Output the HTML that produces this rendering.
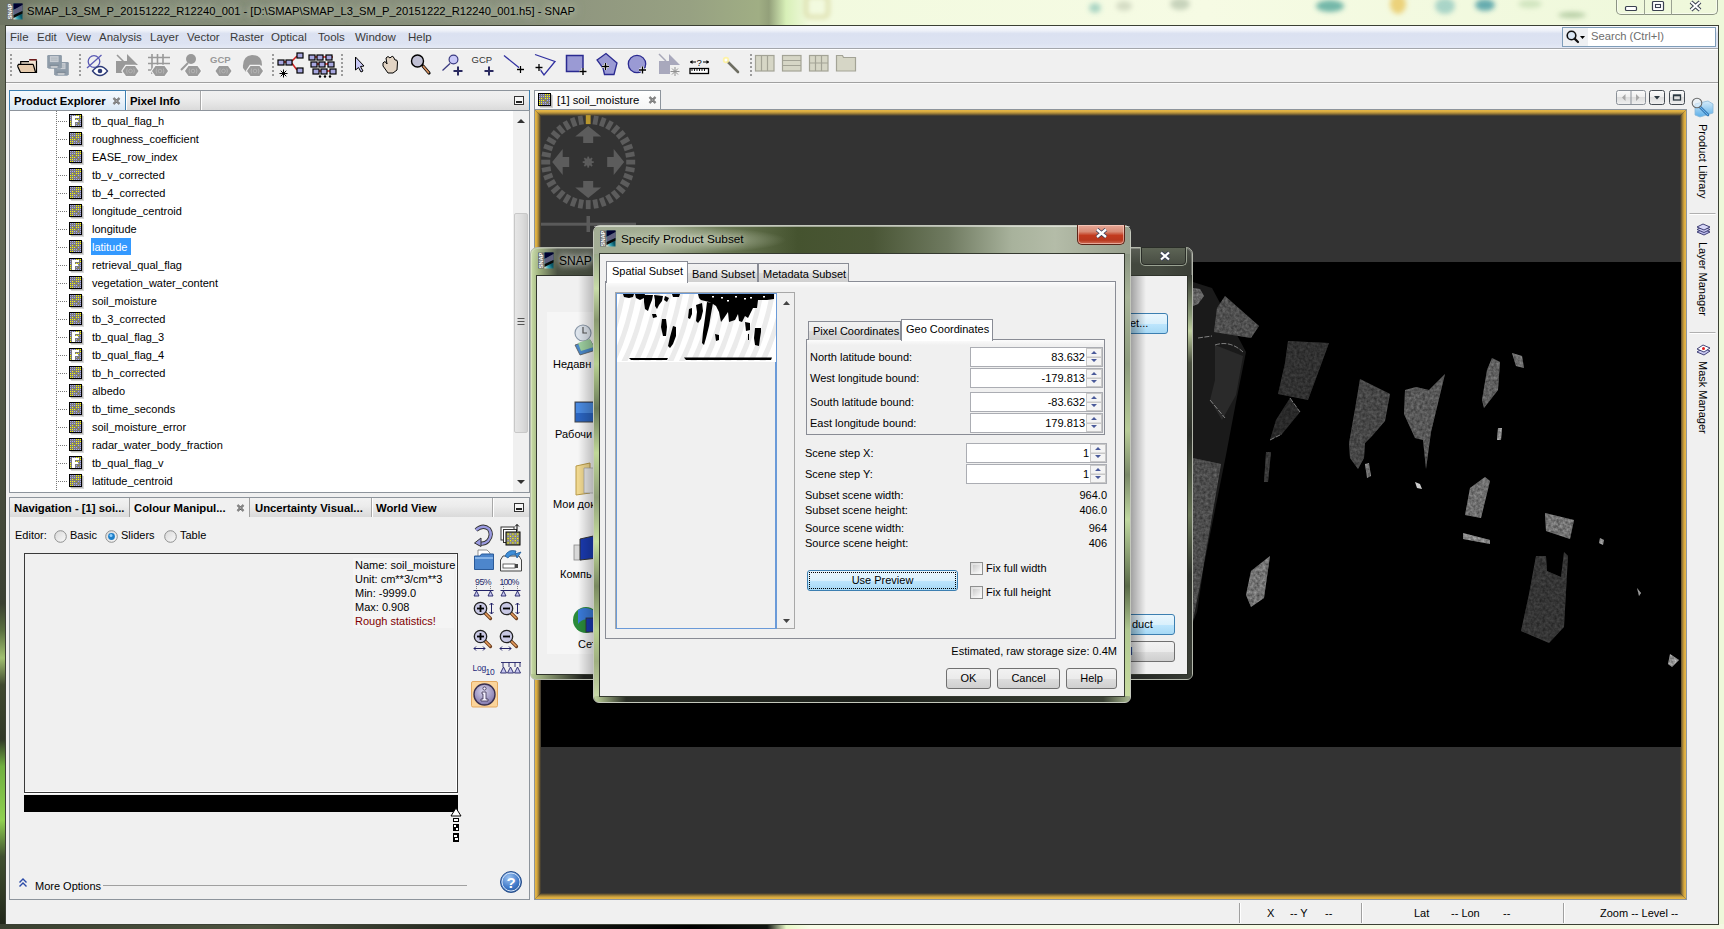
<!DOCTYPE html>
<html><head><meta charset="utf-8">
<style>
*{margin:0;padding:0;box-sizing:border-box}
html,body{width:1724px;height:929px;overflow:hidden;background:#6f7a62;font-family:"Liberation Sans",sans-serif;font-size:11px;color:#000}
.a{position:absolute}
.nw{white-space:nowrap}
#titlebg{left:0;top:0;width:1724px;height:929px;background:linear-gradient(90deg,#6d7462 0,#858b78 8%,#8c917e 30%,#97a182 40%,#a0ae84 44%,#93a07a 44.6%,#d8f0b8 45.6%,#f2fadf 47%,#f6fbe4 70%,#eef8da 100%)}
#frameL{left:0;top:25px;width:5px;height:904px;background:linear-gradient(180deg,#767c68 0,#5e6452 30%,#3a4032 64%,#5a7040 67%,#a0c070 70%,#404a30 73%,#303828 79%,#70b040 82%,#90d050 88%,#405030 92%,#202418 100%)}
#frameB{left:0;top:924px;width:1724px;height:5px;background:linear-gradient(90deg,#3a4030 0,#4e5440 15%,#2a2e24 25%,#000 40%,#101410 44.5%,#e8f8c8 45.6%,#f8fce8 47%,#f4f8e2 100%)}
#client{left:5px;top:25px;width:1714px;height:900px;background:#f0f0f0;border:1px solid #3b4034}
.menu{font-size:11.5px;color:#3a3a3a}
.tabt{font-size:11.3px;font-weight:bold;color:#000;line-height:18px}
.tree{font-size:11px;line-height:18px}
.title{font-size:11.2px;line-height:13px;color:#000;text-shadow:0 0 7px rgba(220,228,205,0.9),0 0 12px rgba(210,218,195,0.6)}
</style></head><body>
<div id="titlebg" class="a"></div>
<div id="frameL" class="a"></div>
<div id="frameB" class="a"></div>
<svg class="a" style="left:7px;top:3px" width="16" height="17" viewBox="0 0 16 17"><defs><linearGradient id="sim" x1="0" y1="1" x2="1" y2="0"><stop offset="0" stop-color="#f0e8d8"/><stop offset="0.25" stop-color="#3aa8b8"/><stop offset="0.5" stop-color="#0a5a6a"/><stop offset="1" stop-color="#102030"/></linearGradient></defs><rect x="0" y="0.5" width="6" height="16" fill="#6e6e6e"/><text transform="translate(5.3 16.3) rotate(-90)" font-size="6.2" font-weight="bold" fill="#fff" font-family="Liberation Sans" textLength="15.5" lengthAdjust="spacingAndGlyphs">SNAP</text><rect x="6.5" y="0.5" width="9" height="16" fill="url(#sim)"/><path d="M6.5 0.5 H15.5 V2 L6.5 7Z" fill="#000030"/><path d="M6.5 7 L15.5 2 V8 L6.5 12Z" fill="#60607e"/><path d="M6.5 12 L15.5 8 V10.5 L6.5 15Z" fill="#080808"/></svg>
<div class="a title nw" style="left:27px;top:5px">SMAP_L3_SM_P_20151222_R12240_001 - [D:\SMAP\SMAP_L3_SM_P_20151222_R12240_001.h5] - SNAP</div>
<div id="client" class="a"></div>
<svg class="a" style="left:780px;top:0" width="944" height="25" viewBox="780 0 944 25"><defs><filter id="bl" x="-50%" y="-50%" width="200%" height="200%"><feGaussianBlur stdDeviation="2.5"/></filter></defs><g filter="url(#bl)"><rect x="806" y="-4" width="22" height="21" rx="4" fill="none" stroke="#d8d8a0" stroke-width="3"/><ellipse cx="1124" cy="6" rx="8" ry="5" fill="#c0c8b0" opacity="0.6"/><ellipse cx="1180" cy="4" rx="10" ry="6" fill="#a8b8a0" opacity="0.6"/><ellipse cx="1330" cy="6" rx="14" ry="6" fill="#3a9a90" opacity="0.7"/><ellipse cx="1398" cy="4" rx="8" ry="10" fill="#e8c050" opacity="0.7"/><ellipse cx="1445" cy="6" rx="10" ry="8" fill="#60b0b0" opacity="0.5"/><ellipse cx="1485" cy="5" rx="10" ry="6" fill="#2a8a9a" opacity="0.7"/><ellipse cx="1530" cy="4" rx="12" ry="4" fill="#b0d0a0" opacity="0.5"/><ellipse cx="1572" cy="15" rx="14" ry="3" fill="#90b080" opacity="0.6"/><ellipse cx="1095" cy="8" rx="6" ry="5" fill="#50a8a0" opacity="0.45"/></g></svg>
<div class="a" style="left:1616px;top:-2px;width:102px;height:17px;border:1px solid #8c9484;border-top:none;border-radius:0 0 5px 5px;background:rgba(240,248,220,0.45);box-shadow:inset 0 0 0 1px rgba(255,255,255,0.5)"></div>
<div class="a" style="left:1644px;top:0;width:1px;height:15px;background:#9aa292"></div><div class="a" style="left:1671px;top:0;width:1px;height:15px;background:#9aa292"></div>
<svg class="a" style="left:1620px;top:0" width="98" height="14" viewBox="1620 0 98 14"><rect x="1625.5" y="6.5" width="11" height="4" rx="1" fill="#fff" stroke="#3a4050" stroke-width="1.2"/><rect x="1652.5" y="1.5" width="11" height="9" rx="1" fill="#fff" stroke="#3a4050" stroke-width="1.2"/><rect x="1655.5" y="4.5" width="5" height="3" fill="none" stroke="#3a4050" stroke-width="1.1"/><path d="M1691 2 L1700 10 M1700 2 L1691 10" stroke="#3a4050" stroke-width="4"/><path d="M1691 2 L1700 10 M1700 2 L1691 10" stroke="#fff" stroke-width="2"/></svg>

<div class="a" style="left:6px;top:26px;width:1712px;height:22px;background:linear-gradient(180deg,#f9fafd 0,#eef1f9 20%,#dbe1f1 35%,#dde3f2 80%,#e4e9f5 100%)"></div>
<div class="a" style="left:6px;top:48px;width:1712px;height:1px;background:#a3a6ab"></div>
<div class="a" style="left:6px;top:49px;width:1712px;height:1px;background:#ffffff"></div>
<div class="a nw menu" style="left:10px;top:31px">File</div>
<div class="a nw menu" style="left:37px;top:31px">Edit</div>
<div class="a nw menu" style="left:66px;top:31px">View</div>
<div class="a nw menu" style="left:99px;top:31px">Analysis</div>
<div class="a nw menu" style="left:150px;top:31px">Layer</div>
<div class="a nw menu" style="left:187px;top:31px">Vector</div>
<div class="a nw menu" style="left:230px;top:31px">Raster</div>
<div class="a nw menu" style="left:271px;top:31px">Optical</div>
<div class="a nw menu" style="left:318px;top:31px">Tools</div>
<div class="a nw menu" style="left:355px;top:31px">Window</div>
<div class="a nw menu" style="left:408px;top:31px">Help</div>
<div class="a" style="left:1562px;top:27px;width:154px;height:20px;border:1px solid #7f9db9;background:#fff"></div>
<div class="a" style="left:1563px;top:28px;width:25px;height:18px;background:#eef0f3"></div>
<svg class="a" style="left:1565px;top:29px" width="22" height="16" viewBox="0 0 22 16"><circle cx="6.5" cy="6.5" r="4.3" fill="#dbe8f5" stroke="#111" stroke-width="1.6"/><path d="M9.6 9.6 L13 13" stroke="#111" stroke-width="2.2" stroke-linecap="round"/><path d="M15 7 L20 7 L17.5 10 Z" fill="#000"/></svg>
<div class="a nw" style="left:1591px;top:29px;font-size:11.2px;line-height:15px;color:#6d6d6d">Search (Ctrl+I)</div>

<div class="a" style="left:6px;top:82px;width:1712px;height:1px;background:#a0a0a0"></div><div class="a" style="left:6px;top:83px;width:1712px;height:1px;background:#fafafa"></div>
<svg class="a" style="left:0;top:0" width="870" height="90" viewBox="0 0 870 90"><rect x="10" y="54" width="2" height="2" fill="#9c9c9c"/><rect x="10" y="58" width="2" height="2" fill="#9c9c9c"/><rect x="10" y="62" width="2" height="2" fill="#9c9c9c"/><rect x="10" y="66" width="2" height="2" fill="#9c9c9c"/><rect x="10" y="70" width="2" height="2" fill="#9c9c9c"/><rect x="10" y="74" width="2" height="2" fill="#9c9c9c"/><rect x="79" y="54" width="2" height="2" fill="#9c9c9c"/><rect x="79" y="58" width="2" height="2" fill="#9c9c9c"/><rect x="79" y="62" width="2" height="2" fill="#9c9c9c"/><rect x="79" y="66" width="2" height="2" fill="#9c9c9c"/><rect x="79" y="70" width="2" height="2" fill="#9c9c9c"/><rect x="79" y="74" width="2" height="2" fill="#9c9c9c"/><rect x="272" y="54" width="2" height="2" fill="#9c9c9c"/><rect x="272" y="58" width="2" height="2" fill="#9c9c9c"/><rect x="272" y="62" width="2" height="2" fill="#9c9c9c"/><rect x="272" y="66" width="2" height="2" fill="#9c9c9c"/><rect x="272" y="70" width="2" height="2" fill="#9c9c9c"/><rect x="272" y="74" width="2" height="2" fill="#9c9c9c"/><rect x="341" y="54" width="2" height="2" fill="#9c9c9c"/><rect x="341" y="58" width="2" height="2" fill="#9c9c9c"/><rect x="341" y="62" width="2" height="2" fill="#9c9c9c"/><rect x="341" y="66" width="2" height="2" fill="#9c9c9c"/><rect x="341" y="70" width="2" height="2" fill="#9c9c9c"/><rect x="341" y="74" width="2" height="2" fill="#9c9c9c"/><rect x="750" y="54" width="2" height="2" fill="#9c9c9c"/><rect x="750" y="58" width="2" height="2" fill="#9c9c9c"/><rect x="750" y="62" width="2" height="2" fill="#9c9c9c"/><rect x="750" y="66" width="2" height="2" fill="#9c9c9c"/><rect x="750" y="70" width="2" height="2" fill="#9c9c9c"/><rect x="750" y="74" width="2" height="2" fill="#9c9c9c"/><path d="M21 61.5 H29 L29.5 60 H36.5 V72.5 H21Z" fill="#f2e4d2"/><path d="M29.2 59.8 H36.8" stroke="#6a1a1a" stroke-width="1.6"/><path d="M20.7 64 V61.6 H29 M36.5 60.5 V73" stroke="#000" stroke-width="1.2" fill="none"/><path d="M17.5 66 L18.5 64.4 H33.2 L35.6 72.5 H20.6Z" fill="#e6ccae"/><path d="M17.5 66 L18.5 64.4 H33.2 M17.5 66 L20.5 72.5 H36.5 M33.2 64.4 L35.6 72.5" stroke="#000" stroke-width="1.2" fill="none"/><path d="M54.1 63.300000000000004 Q54.1 62.1 55.300000000000004 62.1 H67.6 Q68.8 62.1 68.8 63.300000000000004 V74.3 L67.3 75.8 H55.6 L54.1 74.3Z" fill="#8e9ba8"/><rect x="56.800000000000004" y="63.1" width="8.7" height="6" fill="#c9ced4"/><path d="M57.800000000000004 65.1 H64.5 M57.800000000000004 67.1 H64.5" stroke="#a8b0b8" stroke-width="0.9"/><rect x="57.6" y="72.6" width="7" height="2.5" rx="1" fill="#c4c8cc"/><rect x="56.6" y="71.8" width="9" height="1" fill="#7a8692"/><path d="M47.2 56.300000000000004 Q47.2 55.1 48.400000000000006 55.1 H60.7 Q61.900000000000006 55.1 61.900000000000006 56.300000000000004 V67.3 L60.400000000000006 68.8 H48.7 L47.2 67.3Z" fill="#8e9ba8"/><rect x="49.900000000000006" y="56.1" width="8.7" height="6" fill="#c9ced4"/><path d="M50.900000000000006 58.1 H57.6 M50.900000000000006 60.1 H57.6" stroke="#a8b0b8" stroke-width="0.9"/><rect x="50.7" y="65.6" width="7" height="2.5" rx="1" fill="#c4c8cc"/><rect x="49.7" y="64.8" width="9" height="1" fill="#7a8692"/><circle cx="94" cy="61.5" r="5.8" fill="none" stroke="#5a5ab4" stroke-width="1.3"/><path d="M87 68 L101.5 55" stroke="#5a5ab4" stroke-width="1.3"/><path d="M92.5 71 Q96 66.5 100 66.5 Q104 66.5 107.5 71 Q104 75.5 100 75.5 Q96 75.5 92.5 71Z" fill="#fff" stroke="#2e3c78" stroke-width="1.3"/><circle cx="100" cy="71" r="2.3" fill="#2e3c78"/><path d="M117 55 L124 62" stroke="#999" stroke-width="1.6"/><rect x="116" y="61" width="12" height="12" fill="#999"/><path d="M127 54 L138 65 H127Z" fill="#999"/><polygon points="121.2,71.0 125.3,64.8 135.7,64.8 139.8,71.0 135.7,77.2 125.3,77.2" fill="#f4f4f4"/><polygon points="122.5,71.0 126.0,66.0 135.0,66.0 138.5,71.0 135.0,76.0 126.0,76.0" fill="#9a9a9a"/><path d="M127.2 68.5 Q126.0 71.0 127.2 73.5 M133.8 68.5 Q135.0 71.0 133.8 73.5" stroke="#b4b4b4" stroke-width="0.9" fill="none"/><circle cx="130.5" cy="71.0" r="1.8" fill="none" stroke="#b4b4b4" stroke-width="0.9"/><path d="M152 54 V74 M157.5 54 V66 M163 54 V66 M148 57.5 H170 M148 63.5 H170 M148 70 H152" stroke="#999" stroke-width="1.6"/><polygon points="150.7,71.0 154.8,64.8 165.2,64.8 169.3,71.0 165.2,77.2 154.8,77.2" fill="#f4f4f4"/><polygon points="152.0,71.0 155.5,66.0 164.5,66.0 168.0,71.0 164.5,76.0 155.5,76.0" fill="#9a9a9a"/><path d="M156.7 68.5 Q155.5 71.0 156.7 73.5 M163.3 68.5 Q164.5 71.0 163.3 73.5" stroke="#b4b4b4" stroke-width="0.9" fill="none"/><circle cx="160.0" cy="71.0" r="1.8" fill="none" stroke="#b4b4b4" stroke-width="0.9"/><circle cx="191" cy="59" r="5" fill="#999"/><path d="M181 70 L188 63" stroke="#999" stroke-width="2"/><polygon points="183.7,71.0 187.8,64.8 198.2,64.8 202.3,71.0 198.2,77.2 187.8,77.2" fill="#f4f4f4"/><polygon points="185.0,71.0 188.5,66.0 197.5,66.0 201.0,71.0 197.5,76.0 188.5,76.0" fill="#9a9a9a"/><path d="M189.7 68.5 Q188.5 71.0 189.7 73.5 M196.3 68.5 Q197.5 71.0 196.3 73.5" stroke="#b4b4b4" stroke-width="0.9" fill="none"/><circle cx="193.0" cy="71.0" r="1.8" fill="none" stroke="#b4b4b4" stroke-width="0.9"/><text x="210" y="63" font-size="9.5" font-weight="bold" fill="#999" font-family="Liberation Sans">GCP</text><polygon points="214.2,71.0 218.3,64.8 228.7,64.8 232.8,71.0 228.7,77.2 218.3,77.2" fill="#f4f4f4"/><polygon points="215.5,71.0 219.0,66.0 228.0,66.0 231.5,71.0 228.0,76.0 219.0,76.0" fill="#9a9a9a"/><path d="M220.2 68.5 Q219.0 71.0 220.2 73.5 M226.8 68.5 Q228.0 71.0 226.8 73.5" stroke="#b4b4b4" stroke-width="0.9" fill="none"/><circle cx="223.5" cy="71.0" r="1.8" fill="none" stroke="#b4b4b4" stroke-width="0.9"/><path d="M243 68 Q242 56 252 55 Q262 55 262 65 L256 72 H246Z" fill="#999"/><polygon points="245.7,71.0 249.8,64.8 260.2,64.8 264.3,71.0 260.2,77.2 249.8,77.2" fill="#f4f4f4"/><polygon points="247.0,71.0 250.5,66.0 259.5,66.0 263.0,71.0 259.5,76.0 250.5,76.0" fill="#9a9a9a"/><path d="M251.7 68.5 Q250.5 71.0 251.7 73.5 M258.3 68.5 Q259.5 71.0 258.3 73.5" stroke="#b4b4b4" stroke-width="0.9" fill="none"/><circle cx="255.0" cy="71.0" r="1.8" fill="none" stroke="#b4b4b4" stroke-width="0.9"/><path d="M284 62 H291 L297 56 M291 62 L297 70" stroke="#d02020" stroke-width="1.5" fill="none"/><rect x="278" y="60" width="6" height="5" fill="#a8a8e0" stroke="#000" stroke-width="1.2"/><rect x="286" y="60" width="6" height="5" fill="#a8a8e0" stroke="#000" stroke-width="1.2"/><rect x="297" y="53" width="6" height="5" fill="#a8a8e0" stroke="#000" stroke-width="1.2"/><rect x="297" y="68" width="6" height="5" fill="#a8a8e0" stroke="#000" stroke-width="1.2"/><path d="M283.5 69.5 V77.5 M279.5 73.5 H287.5 M280.7 70.7 L286.3 76.3 M286.3 70.7 L280.7 76.3" stroke="#000" stroke-width="1"/><path d="M312 57 H333 M314 64 H333 M316 71 H333" stroke="#d02020" stroke-width="1.5"/><rect x="309" y="55" width="6" height="5" fill="#a8a8e0" stroke="#000" stroke-width="1.2"/><rect x="317" y="55" width="6" height="5" fill="#a8a8e0" stroke="#000" stroke-width="1.2"/><rect x="326" y="55" width="6" height="5" fill="#a8a8e0" stroke="#000" stroke-width="1.2"/><rect x="311" y="62" width="6" height="5" fill="#a8a8e0" stroke="#000" stroke-width="1.2"/><rect x="319" y="62" width="6" height="5" fill="#a8a8e0" stroke="#000" stroke-width="1.2"/><rect x="328" y="62" width="6" height="5" fill="#a8a8e0" stroke="#000" stroke-width="1.2"/><rect x="313" y="69" width="6" height="5" fill="#a8a8e0" stroke="#000" stroke-width="1.2"/><rect x="321" y="69" width="6" height="5" fill="#a8a8e0" stroke="#000" stroke-width="1.2"/><rect x="330" y="69" width="6" height="5" fill="#a8a8e0" stroke="#000" stroke-width="1.2"/><circle cx="320" cy="76.5" r="1.2" fill="#000"/><circle cx="325" cy="76.5" r="1.2" fill="#000"/><circle cx="330" cy="76.5" r="1.2" fill="#000"/><path d="M355.5 57 L355.5 70 L358.5 67.5 L361 72 L363 71 L360.5 66.5 L364 66 Z" fill="#c8c8f4" stroke="#000" stroke-width="1"/><path d="M383 63 Q385 60 387 64 L386 58 Q388 55 390 58 L391 57 Q393 55 394 58 L395 60 Q397 59 397.5 62 L397 70 L393 73 H388 L383 66 Z" fill="#e2d4c4" stroke="#000" stroke-width="1"/><path d="M423 66 L429 73" stroke="#000" stroke-width="3.2" stroke-linecap="round"/><path d="M423.5 66.5 L428.5 72.5" stroke="#d49060" stroke-width="1.8" stroke-linecap="round"/><circle cx="417.5" cy="61" r="6" fill="#c0c0d4" stroke="#000" stroke-width="1.4"/><path d="M442.5 70.5 L450 63.5" stroke="#3a3a80" stroke-width="1.3"/><circle cx="453.5" cy="59.5" r="4.4" fill="#c8c8f8" stroke="#3a3a80" stroke-width="1.2"/><path d="M453.5 71H462.5M458 66.5V75.5" stroke="#2a2a60" stroke-width="2"/><text x="471.5" y="63" font-size="9.5" fill="#333" font-family="Liberation Sans">GCP</text><path d="M484.5 71H493.5M489 66.5V75.5" stroke="#2a2a60" stroke-width="2"/><path d="M504 55.5 L519.5 68" stroke="#3030a0" stroke-width="1.3"/><path d="M517.0 69.5H524.0M520.5 66.0V73.0" stroke="#fff" stroke-width="2.8"/><path d="M517.0 69.5H524.0M520.5 66.0V73.0" stroke="#000" stroke-width="1.3"/><path d="M535 54.5 L555 61.5 L544 75 L539 68" stroke="#3030a0" stroke-width="1.3" fill="none"/><path d="M535.5 67.5H542.5M539 64.0V71.0" stroke="#fff" stroke-width="2.8"/><path d="M535.5 67.5H542.5M539 64.0V71.0" stroke="#000" stroke-width="1.3"/><rect x="566.5" y="55.5" width="16.5" height="16" fill="#9a9ad4" stroke="#2a2a90" stroke-width="1.5"/><path d="M579.5 71.5H586.5M583 68.0V75.0" stroke="#fff" stroke-width="2.9"/><path d="M579.5 71.5H586.5M583 68.0V75.0" stroke="#000" stroke-width="1.4"/><path d="M597 60 L606 53.5 L617 63 L614 74.5 L604.5 74.5 L603 68 Z" fill="#9a9ad4" stroke="#2a2a90" stroke-width="1.3"/><path d="M602.0 66.5H609.0M605.5 63.0V70.0" stroke="#fff" stroke-width="2.9"/><path d="M602.0 66.5H609.0M605.5 63.0V70.0" stroke="#000" stroke-width="1.4"/><circle cx="637" cy="64" r="8.7" fill="#9a9ad4" stroke="#2a2a90" stroke-width="1.3"/><path d="M639.0 70H646.0M642.5 66.5V73.5" stroke="#fff" stroke-width="2.9"/><path d="M639.0 70H646.0M642.5 66.5V73.5" stroke="#000" stroke-width="1.4"/><path d="M659 54 L666 61" stroke="#a8a8b8" stroke-width="1.5"/><rect x="659" y="61" width="11" height="13" fill="#a8a8bc"/><path d="M669 54 L680 65 H669Z" fill="#a8a8bc"/><path d="M675 67 V76 M670.5 71.5 H679.5 M672 68.5 L678 74.5 M678 68.5 L672 74.5" stroke="#909090" stroke-width="1"/><rect x="690" y="68.5" width="18.5" height="5" fill="#fff" stroke="#000" stroke-width="1.3"/><path d="M692 69 V71 M694.5 69 V71 M697 69 V71 M699.5 69 V71 M702 69 V71 M704.5 69 V71" stroke="#000" stroke-width="0.9"/><path d="M690 62 H696 M703 62 H709" stroke="#000" stroke-width="1.1"/><path d="M690 62 L692.5 60 V64Z M709 62 L706.5 60 V64Z" fill="#000"/><text x="696.5" y="65.5" font-size="9.5" fill="#000" font-family="Liberation Sans">?</text><path d="M727 61 L738 72" stroke="#6e6e62" stroke-width="2.6" stroke-linecap="round"/><circle cx="726" cy="60" r="3.2" fill="#fff3a0" opacity="0.9"/><circle cx="726" cy="60" r="1.5" fill="#fff"/><rect x="755.5" y="55.5" width="18.5" height="15.5" fill="#d6d6c6" stroke="#a3a396" stroke-width="1.2"/><path d="M761.5 55.5 V71 M767.5 55.5 V71" stroke="#a3a396" stroke-width="1.2"/><rect x="782.5" y="55.5" width="18.5" height="15.5" fill="#d6d6c6" stroke="#a3a396" stroke-width="1.2"/><path d="M782.5 60.5 H801 M782.5 65.5 H801" stroke="#a3a396" stroke-width="1.2"/><rect x="809.5" y="55.5" width="18.5" height="15.5" fill="#d6d6c6" stroke="#a3a396" stroke-width="1.2"/><path d="M815.5 55.5 V71 M821.5 55.5 V71 M809.5 63 H828" stroke="#a3a396" stroke-width="1.2"/><path d="M836.5 55.5 H842.5 L843.5 57.5 H855.5 V71 H836.5Z" fill="#d6d6c6" stroke="#a3a396" stroke-width="1.2"/></svg>

<div class="a" style="left:9px;top:90px;width:521px;height:21px;border:1px solid #8d949c;border-bottom:none;background:linear-gradient(180deg,#f0f0f0 0,#ececec 40%,#d9d9d9 100%)"></div>
<div class="a" style="left:9px;top:90px;width:117px;height:21px;border:1px solid #3c7fb1;border-bottom:none;background:linear-gradient(180deg,#f5f9fd 0,#e9f2fa 50%,#d5e6f5 100%)"></div>
<div class="a" style="left:126px;top:91px;width:1px;height:20px;background:#fff"></div>
<div class="a" style="left:200px;top:91px;width:1px;height:20px;background:#a8a8a8"></div><div class="a" style="left:201px;top:91px;width:1px;height:20px;background:#fff"></div>
<div class="a" style="left:529px;top:90px;width:1px;height:21px;background:#3c7fb1"></div>
<div class="a nw tabt" style="left:14px;top:92px">Product Explorer</div>
<div class="a nw tabt" style="left:130px;top:92px">Pixel Info</div>
<svg class="a" style="left:112px;top:97px" width="9" height="8" viewBox="0 0 9 8"><path d="M1.5 1 L7.5 7 M7.5 1 L1.5 7" stroke="#555" stroke-width="2.2"/><path d="M1.5 1 L7.5 7 M7.5 1 L1.5 7" stroke="#ddd" stroke-width="0.7"/></svg>
<div class="a" style="left:514px;top:96px;width:10px;height:9px;border:1px solid #333;background:#f6f6f6"></div><div class="a" style="left:516px;top:101px;width:6px;height:2px;background:#222"></div>
<div class="a" style="left:9px;top:110px;width:521px;height:383px;border:1px solid #8d949c;background:#fff"></div>
<div class="a" style="left:513px;top:111px;width:16px;height:381px;background:#f0f0f0"></div>
<div class="a" style="left:514px;top:213px;width:14px;height:220px;border:1px solid #c8c8c8;border-radius:2px;background:linear-gradient(90deg,#e6e6e6,#dcdcdc 60%,#d0d0d0)"></div>
<svg class="a" style="left:513px;top:111px" width="16" height="381" viewBox="0 0 16 381"><path d="M4 12 L8 8 L12 12Z" fill="#333"/><path d="M4 369 L8 373 L12 369Z" fill="#333"/><path d="M4.5 207.5 H11.5 M4.5 210.5 H11.5 M4.5 213.5 H11.5" stroke="#555" stroke-width="1"/></svg>
<svg class="a" style="left:10px;top:111px" width="500" height="381" viewBox="10 111 500 381" shape-rendering="crispEdges"><path d="M56.5 111 V491" stroke="#777" stroke-width="1" stroke-dasharray="1 1"/><path d="M58 121.5 H67" stroke="#777" stroke-width="1" stroke-dasharray="1 1"/><rect x="71" y="116" width="13" height="13" fill="#000" opacity="0.15"/><rect x="70" y="115" width="13" height="13" fill="#000" opacity="0.15"/><rect x="69" y="114" width="13" height="13" fill="#000"/><rect x="70" y="115" width="11" height="11" fill="#7c7c7c"/><rect x="70" y="115" width="1" height="1" fill="#a8a8f8"/><rect x="72" y="115" width="1" height="1" fill="#a8a8f8"/><rect x="74" y="115" width="1" height="1" fill="#a8a8f8"/><rect x="76" y="115" width="1" height="1" fill="#ffff00"/><rect x="78" y="115" width="1" height="1" fill="#ffff00"/><rect x="80" y="115" width="1" height="1" fill="#ffff00"/><rect x="70" y="117" width="1" height="1" fill="#a8a8f8"/><rect x="72" y="117" width="1" height="1" fill="#a8a8f8"/><rect x="74" y="117" width="1" height="1" fill="#a8a8f8"/><rect x="76" y="117" width="1" height="1" fill="#ffff00"/><rect x="78" y="117" width="1" height="1" fill="#ffff00"/><rect x="80" y="117" width="1" height="1" fill="#ffff00"/><rect x="70" y="119" width="1" height="1" fill="#a8a8f8"/><rect x="72" y="119" width="1" height="1" fill="#ffff00"/><rect x="74" y="119" width="1" height="1" fill="#a09a20"/><rect x="76" y="119" width="1" height="1" fill="#ffff00"/><rect x="78" y="119" width="1" height="1" fill="#ffff00"/><rect x="80" y="119" width="1" height="1" fill="#a8a8f8"/><rect x="70" y="121" width="1" height="1" fill="#ffff00"/><rect x="72" y="121" width="1" height="1" fill="#ffff00"/><rect x="74" y="121" width="1" height="1" fill="#ffff00"/><rect x="76" y="121" width="1" height="1" fill="#a09a20"/><rect x="78" y="121" width="1" height="1" fill="#a8a8f8"/><rect x="80" y="121" width="1" height="1" fill="#a8a8f8"/><rect x="70" y="123" width="1" height="1" fill="#ffff00"/><rect x="72" y="123" width="1" height="1" fill="#ffff00"/><rect x="74" y="123" width="1" height="1" fill="#a8a8f8"/><rect x="76" y="123" width="1" height="1" fill="#a8a8f8"/><rect x="78" y="123" width="1" height="1" fill="#a09a20"/><rect x="80" y="123" width="1" height="1" fill="#a8a8f8"/><rect x="70" y="125" width="1" height="1" fill="#ffff00"/><rect x="72" y="125" width="1" height="1" fill="#ffff00"/><rect x="74" y="125" width="1" height="1" fill="#a8a8f8"/><rect x="76" y="125" width="1" height="1" fill="#a8a8f8"/><rect x="78" y="125" width="1" height="1" fill="#a8a8f8"/><rect x="80" y="125" width="1" height="1" fill="#a8a8f8"/><path d="M72 116 H79 V118 H75 V120 H78 V122 H75 V126 H72Z" fill="#fff"/><path d="M58 139.5 H67" stroke="#777" stroke-width="1" stroke-dasharray="1 1"/><rect x="71" y="134" width="13" height="13" fill="#000" opacity="0.15"/><rect x="70" y="133" width="13" height="13" fill="#000" opacity="0.15"/><rect x="69" y="132" width="13" height="13" fill="#000"/><rect x="70" y="133" width="11" height="11" fill="#7c7c7c"/><rect x="70" y="133" width="1" height="1" fill="#a8a8f8"/><rect x="72" y="133" width="1" height="1" fill="#a8a8f8"/><rect x="74" y="133" width="1" height="1" fill="#a8a8f8"/><rect x="76" y="133" width="1" height="1" fill="#ffff00"/><rect x="78" y="133" width="1" height="1" fill="#ffff00"/><rect x="80" y="133" width="1" height="1" fill="#ffff00"/><rect x="70" y="135" width="1" height="1" fill="#a8a8f8"/><rect x="72" y="135" width="1" height="1" fill="#a8a8f8"/><rect x="74" y="135" width="1" height="1" fill="#a8a8f8"/><rect x="76" y="135" width="1" height="1" fill="#ffff00"/><rect x="78" y="135" width="1" height="1" fill="#ffff00"/><rect x="80" y="135" width="1" height="1" fill="#ffff00"/><rect x="70" y="137" width="1" height="1" fill="#a8a8f8"/><rect x="72" y="137" width="1" height="1" fill="#ffff00"/><rect x="74" y="137" width="1" height="1" fill="#a09a20"/><rect x="76" y="137" width="1" height="1" fill="#ffff00"/><rect x="78" y="137" width="1" height="1" fill="#ffff00"/><rect x="80" y="137" width="1" height="1" fill="#a8a8f8"/><rect x="70" y="139" width="1" height="1" fill="#ffff00"/><rect x="72" y="139" width="1" height="1" fill="#ffff00"/><rect x="74" y="139" width="1" height="1" fill="#ffff00"/><rect x="76" y="139" width="1" height="1" fill="#a09a20"/><rect x="78" y="139" width="1" height="1" fill="#a8a8f8"/><rect x="80" y="139" width="1" height="1" fill="#a8a8f8"/><rect x="70" y="141" width="1" height="1" fill="#ffff00"/><rect x="72" y="141" width="1" height="1" fill="#ffff00"/><rect x="74" y="141" width="1" height="1" fill="#a8a8f8"/><rect x="76" y="141" width="1" height="1" fill="#a8a8f8"/><rect x="78" y="141" width="1" height="1" fill="#a09a20"/><rect x="80" y="141" width="1" height="1" fill="#a8a8f8"/><rect x="70" y="143" width="1" height="1" fill="#ffff00"/><rect x="72" y="143" width="1" height="1" fill="#ffff00"/><rect x="74" y="143" width="1" height="1" fill="#a8a8f8"/><rect x="76" y="143" width="1" height="1" fill="#a8a8f8"/><rect x="78" y="143" width="1" height="1" fill="#a8a8f8"/><rect x="80" y="143" width="1" height="1" fill="#a8a8f8"/><path d="M58 157.5 H67" stroke="#777" stroke-width="1" stroke-dasharray="1 1"/><rect x="71" y="152" width="13" height="13" fill="#000" opacity="0.15"/><rect x="70" y="151" width="13" height="13" fill="#000" opacity="0.15"/><rect x="69" y="150" width="13" height="13" fill="#000"/><rect x="70" y="151" width="11" height="11" fill="#7c7c7c"/><rect x="70" y="151" width="1" height="1" fill="#a8a8f8"/><rect x="72" y="151" width="1" height="1" fill="#a8a8f8"/><rect x="74" y="151" width="1" height="1" fill="#a8a8f8"/><rect x="76" y="151" width="1" height="1" fill="#ffff00"/><rect x="78" y="151" width="1" height="1" fill="#ffff00"/><rect x="80" y="151" width="1" height="1" fill="#ffff00"/><rect x="70" y="153" width="1" height="1" fill="#a8a8f8"/><rect x="72" y="153" width="1" height="1" fill="#a8a8f8"/><rect x="74" y="153" width="1" height="1" fill="#a8a8f8"/><rect x="76" y="153" width="1" height="1" fill="#ffff00"/><rect x="78" y="153" width="1" height="1" fill="#ffff00"/><rect x="80" y="153" width="1" height="1" fill="#ffff00"/><rect x="70" y="155" width="1" height="1" fill="#a8a8f8"/><rect x="72" y="155" width="1" height="1" fill="#ffff00"/><rect x="74" y="155" width="1" height="1" fill="#a09a20"/><rect x="76" y="155" width="1" height="1" fill="#ffff00"/><rect x="78" y="155" width="1" height="1" fill="#ffff00"/><rect x="80" y="155" width="1" height="1" fill="#a8a8f8"/><rect x="70" y="157" width="1" height="1" fill="#ffff00"/><rect x="72" y="157" width="1" height="1" fill="#ffff00"/><rect x="74" y="157" width="1" height="1" fill="#ffff00"/><rect x="76" y="157" width="1" height="1" fill="#a09a20"/><rect x="78" y="157" width="1" height="1" fill="#a8a8f8"/><rect x="80" y="157" width="1" height="1" fill="#a8a8f8"/><rect x="70" y="159" width="1" height="1" fill="#ffff00"/><rect x="72" y="159" width="1" height="1" fill="#ffff00"/><rect x="74" y="159" width="1" height="1" fill="#a8a8f8"/><rect x="76" y="159" width="1" height="1" fill="#a8a8f8"/><rect x="78" y="159" width="1" height="1" fill="#a09a20"/><rect x="80" y="159" width="1" height="1" fill="#a8a8f8"/><rect x="70" y="161" width="1" height="1" fill="#ffff00"/><rect x="72" y="161" width="1" height="1" fill="#ffff00"/><rect x="74" y="161" width="1" height="1" fill="#a8a8f8"/><rect x="76" y="161" width="1" height="1" fill="#a8a8f8"/><rect x="78" y="161" width="1" height="1" fill="#a8a8f8"/><rect x="80" y="161" width="1" height="1" fill="#a8a8f8"/><path d="M58 175.5 H67" stroke="#777" stroke-width="1" stroke-dasharray="1 1"/><rect x="71" y="170" width="13" height="13" fill="#000" opacity="0.15"/><rect x="70" y="169" width="13" height="13" fill="#000" opacity="0.15"/><rect x="69" y="168" width="13" height="13" fill="#000"/><rect x="70" y="169" width="11" height="11" fill="#7c7c7c"/><rect x="70" y="169" width="1" height="1" fill="#a8a8f8"/><rect x="72" y="169" width="1" height="1" fill="#a8a8f8"/><rect x="74" y="169" width="1" height="1" fill="#a8a8f8"/><rect x="76" y="169" width="1" height="1" fill="#ffff00"/><rect x="78" y="169" width="1" height="1" fill="#ffff00"/><rect x="80" y="169" width="1" height="1" fill="#ffff00"/><rect x="70" y="171" width="1" height="1" fill="#a8a8f8"/><rect x="72" y="171" width="1" height="1" fill="#a8a8f8"/><rect x="74" y="171" width="1" height="1" fill="#a8a8f8"/><rect x="76" y="171" width="1" height="1" fill="#ffff00"/><rect x="78" y="171" width="1" height="1" fill="#ffff00"/><rect x="80" y="171" width="1" height="1" fill="#ffff00"/><rect x="70" y="173" width="1" height="1" fill="#a8a8f8"/><rect x="72" y="173" width="1" height="1" fill="#ffff00"/><rect x="74" y="173" width="1" height="1" fill="#a09a20"/><rect x="76" y="173" width="1" height="1" fill="#ffff00"/><rect x="78" y="173" width="1" height="1" fill="#ffff00"/><rect x="80" y="173" width="1" height="1" fill="#a8a8f8"/><rect x="70" y="175" width="1" height="1" fill="#ffff00"/><rect x="72" y="175" width="1" height="1" fill="#ffff00"/><rect x="74" y="175" width="1" height="1" fill="#ffff00"/><rect x="76" y="175" width="1" height="1" fill="#a09a20"/><rect x="78" y="175" width="1" height="1" fill="#a8a8f8"/><rect x="80" y="175" width="1" height="1" fill="#a8a8f8"/><rect x="70" y="177" width="1" height="1" fill="#ffff00"/><rect x="72" y="177" width="1" height="1" fill="#ffff00"/><rect x="74" y="177" width="1" height="1" fill="#a8a8f8"/><rect x="76" y="177" width="1" height="1" fill="#a8a8f8"/><rect x="78" y="177" width="1" height="1" fill="#a09a20"/><rect x="80" y="177" width="1" height="1" fill="#a8a8f8"/><rect x="70" y="179" width="1" height="1" fill="#ffff00"/><rect x="72" y="179" width="1" height="1" fill="#ffff00"/><rect x="74" y="179" width="1" height="1" fill="#a8a8f8"/><rect x="76" y="179" width="1" height="1" fill="#a8a8f8"/><rect x="78" y="179" width="1" height="1" fill="#a8a8f8"/><rect x="80" y="179" width="1" height="1" fill="#a8a8f8"/><path d="M58 193.5 H67" stroke="#777" stroke-width="1" stroke-dasharray="1 1"/><rect x="71" y="188" width="13" height="13" fill="#000" opacity="0.15"/><rect x="70" y="187" width="13" height="13" fill="#000" opacity="0.15"/><rect x="69" y="186" width="13" height="13" fill="#000"/><rect x="70" y="187" width="11" height="11" fill="#7c7c7c"/><rect x="70" y="187" width="1" height="1" fill="#a8a8f8"/><rect x="72" y="187" width="1" height="1" fill="#a8a8f8"/><rect x="74" y="187" width="1" height="1" fill="#a8a8f8"/><rect x="76" y="187" width="1" height="1" fill="#ffff00"/><rect x="78" y="187" width="1" height="1" fill="#ffff00"/><rect x="80" y="187" width="1" height="1" fill="#ffff00"/><rect x="70" y="189" width="1" height="1" fill="#a8a8f8"/><rect x="72" y="189" width="1" height="1" fill="#a8a8f8"/><rect x="74" y="189" width="1" height="1" fill="#a8a8f8"/><rect x="76" y="189" width="1" height="1" fill="#ffff00"/><rect x="78" y="189" width="1" height="1" fill="#ffff00"/><rect x="80" y="189" width="1" height="1" fill="#ffff00"/><rect x="70" y="191" width="1" height="1" fill="#a8a8f8"/><rect x="72" y="191" width="1" height="1" fill="#ffff00"/><rect x="74" y="191" width="1" height="1" fill="#a09a20"/><rect x="76" y="191" width="1" height="1" fill="#ffff00"/><rect x="78" y="191" width="1" height="1" fill="#ffff00"/><rect x="80" y="191" width="1" height="1" fill="#a8a8f8"/><rect x="70" y="193" width="1" height="1" fill="#ffff00"/><rect x="72" y="193" width="1" height="1" fill="#ffff00"/><rect x="74" y="193" width="1" height="1" fill="#ffff00"/><rect x="76" y="193" width="1" height="1" fill="#a09a20"/><rect x="78" y="193" width="1" height="1" fill="#a8a8f8"/><rect x="80" y="193" width="1" height="1" fill="#a8a8f8"/><rect x="70" y="195" width="1" height="1" fill="#ffff00"/><rect x="72" y="195" width="1" height="1" fill="#ffff00"/><rect x="74" y="195" width="1" height="1" fill="#a8a8f8"/><rect x="76" y="195" width="1" height="1" fill="#a8a8f8"/><rect x="78" y="195" width="1" height="1" fill="#a09a20"/><rect x="80" y="195" width="1" height="1" fill="#a8a8f8"/><rect x="70" y="197" width="1" height="1" fill="#ffff00"/><rect x="72" y="197" width="1" height="1" fill="#ffff00"/><rect x="74" y="197" width="1" height="1" fill="#a8a8f8"/><rect x="76" y="197" width="1" height="1" fill="#a8a8f8"/><rect x="78" y="197" width="1" height="1" fill="#a8a8f8"/><rect x="80" y="197" width="1" height="1" fill="#a8a8f8"/><path d="M58 211.5 H67" stroke="#777" stroke-width="1" stroke-dasharray="1 1"/><rect x="71" y="206" width="13" height="13" fill="#000" opacity="0.15"/><rect x="70" y="205" width="13" height="13" fill="#000" opacity="0.15"/><rect x="69" y="204" width="13" height="13" fill="#000"/><rect x="70" y="205" width="11" height="11" fill="#7c7c7c"/><rect x="70" y="205" width="1" height="1" fill="#a8a8f8"/><rect x="72" y="205" width="1" height="1" fill="#a8a8f8"/><rect x="74" y="205" width="1" height="1" fill="#a8a8f8"/><rect x="76" y="205" width="1" height="1" fill="#ffff00"/><rect x="78" y="205" width="1" height="1" fill="#ffff00"/><rect x="80" y="205" width="1" height="1" fill="#ffff00"/><rect x="70" y="207" width="1" height="1" fill="#a8a8f8"/><rect x="72" y="207" width="1" height="1" fill="#a8a8f8"/><rect x="74" y="207" width="1" height="1" fill="#a8a8f8"/><rect x="76" y="207" width="1" height="1" fill="#ffff00"/><rect x="78" y="207" width="1" height="1" fill="#ffff00"/><rect x="80" y="207" width="1" height="1" fill="#ffff00"/><rect x="70" y="209" width="1" height="1" fill="#a8a8f8"/><rect x="72" y="209" width="1" height="1" fill="#ffff00"/><rect x="74" y="209" width="1" height="1" fill="#a09a20"/><rect x="76" y="209" width="1" height="1" fill="#ffff00"/><rect x="78" y="209" width="1" height="1" fill="#ffff00"/><rect x="80" y="209" width="1" height="1" fill="#a8a8f8"/><rect x="70" y="211" width="1" height="1" fill="#ffff00"/><rect x="72" y="211" width="1" height="1" fill="#ffff00"/><rect x="74" y="211" width="1" height="1" fill="#ffff00"/><rect x="76" y="211" width="1" height="1" fill="#a09a20"/><rect x="78" y="211" width="1" height="1" fill="#a8a8f8"/><rect x="80" y="211" width="1" height="1" fill="#a8a8f8"/><rect x="70" y="213" width="1" height="1" fill="#ffff00"/><rect x="72" y="213" width="1" height="1" fill="#ffff00"/><rect x="74" y="213" width="1" height="1" fill="#a8a8f8"/><rect x="76" y="213" width="1" height="1" fill="#a8a8f8"/><rect x="78" y="213" width="1" height="1" fill="#a09a20"/><rect x="80" y="213" width="1" height="1" fill="#a8a8f8"/><rect x="70" y="215" width="1" height="1" fill="#ffff00"/><rect x="72" y="215" width="1" height="1" fill="#ffff00"/><rect x="74" y="215" width="1" height="1" fill="#a8a8f8"/><rect x="76" y="215" width="1" height="1" fill="#a8a8f8"/><rect x="78" y="215" width="1" height="1" fill="#a8a8f8"/><rect x="80" y="215" width="1" height="1" fill="#a8a8f8"/><path d="M58 229.5 H67" stroke="#777" stroke-width="1" stroke-dasharray="1 1"/><rect x="71" y="224" width="13" height="13" fill="#000" opacity="0.15"/><rect x="70" y="223" width="13" height="13" fill="#000" opacity="0.15"/><rect x="69" y="222" width="13" height="13" fill="#000"/><rect x="70" y="223" width="11" height="11" fill="#7c7c7c"/><rect x="70" y="223" width="1" height="1" fill="#a8a8f8"/><rect x="72" y="223" width="1" height="1" fill="#a8a8f8"/><rect x="74" y="223" width="1" height="1" fill="#a8a8f8"/><rect x="76" y="223" width="1" height="1" fill="#ffff00"/><rect x="78" y="223" width="1" height="1" fill="#ffff00"/><rect x="80" y="223" width="1" height="1" fill="#ffff00"/><rect x="70" y="225" width="1" height="1" fill="#a8a8f8"/><rect x="72" y="225" width="1" height="1" fill="#a8a8f8"/><rect x="74" y="225" width="1" height="1" fill="#a8a8f8"/><rect x="76" y="225" width="1" height="1" fill="#ffff00"/><rect x="78" y="225" width="1" height="1" fill="#ffff00"/><rect x="80" y="225" width="1" height="1" fill="#ffff00"/><rect x="70" y="227" width="1" height="1" fill="#a8a8f8"/><rect x="72" y="227" width="1" height="1" fill="#ffff00"/><rect x="74" y="227" width="1" height="1" fill="#a09a20"/><rect x="76" y="227" width="1" height="1" fill="#ffff00"/><rect x="78" y="227" width="1" height="1" fill="#ffff00"/><rect x="80" y="227" width="1" height="1" fill="#a8a8f8"/><rect x="70" y="229" width="1" height="1" fill="#ffff00"/><rect x="72" y="229" width="1" height="1" fill="#ffff00"/><rect x="74" y="229" width="1" height="1" fill="#ffff00"/><rect x="76" y="229" width="1" height="1" fill="#a09a20"/><rect x="78" y="229" width="1" height="1" fill="#a8a8f8"/><rect x="80" y="229" width="1" height="1" fill="#a8a8f8"/><rect x="70" y="231" width="1" height="1" fill="#ffff00"/><rect x="72" y="231" width="1" height="1" fill="#ffff00"/><rect x="74" y="231" width="1" height="1" fill="#a8a8f8"/><rect x="76" y="231" width="1" height="1" fill="#a8a8f8"/><rect x="78" y="231" width="1" height="1" fill="#a09a20"/><rect x="80" y="231" width="1" height="1" fill="#a8a8f8"/><rect x="70" y="233" width="1" height="1" fill="#ffff00"/><rect x="72" y="233" width="1" height="1" fill="#ffff00"/><rect x="74" y="233" width="1" height="1" fill="#a8a8f8"/><rect x="76" y="233" width="1" height="1" fill="#a8a8f8"/><rect x="78" y="233" width="1" height="1" fill="#a8a8f8"/><rect x="80" y="233" width="1" height="1" fill="#a8a8f8"/><path d="M58 247.5 H67" stroke="#777" stroke-width="1" stroke-dasharray="1 1"/><rect x="71" y="242" width="13" height="13" fill="#000" opacity="0.15"/><rect x="70" y="241" width="13" height="13" fill="#000" opacity="0.15"/><rect x="69" y="240" width="13" height="13" fill="#000"/><rect x="70" y="241" width="11" height="11" fill="#7c7c7c"/><rect x="70" y="241" width="1" height="1" fill="#a8a8f8"/><rect x="72" y="241" width="1" height="1" fill="#a8a8f8"/><rect x="74" y="241" width="1" height="1" fill="#a8a8f8"/><rect x="76" y="241" width="1" height="1" fill="#ffff00"/><rect x="78" y="241" width="1" height="1" fill="#ffff00"/><rect x="80" y="241" width="1" height="1" fill="#ffff00"/><rect x="70" y="243" width="1" height="1" fill="#a8a8f8"/><rect x="72" y="243" width="1" height="1" fill="#a8a8f8"/><rect x="74" y="243" width="1" height="1" fill="#a8a8f8"/><rect x="76" y="243" width="1" height="1" fill="#ffff00"/><rect x="78" y="243" width="1" height="1" fill="#ffff00"/><rect x="80" y="243" width="1" height="1" fill="#ffff00"/><rect x="70" y="245" width="1" height="1" fill="#a8a8f8"/><rect x="72" y="245" width="1" height="1" fill="#ffff00"/><rect x="74" y="245" width="1" height="1" fill="#a09a20"/><rect x="76" y="245" width="1" height="1" fill="#ffff00"/><rect x="78" y="245" width="1" height="1" fill="#ffff00"/><rect x="80" y="245" width="1" height="1" fill="#a8a8f8"/><rect x="70" y="247" width="1" height="1" fill="#ffff00"/><rect x="72" y="247" width="1" height="1" fill="#ffff00"/><rect x="74" y="247" width="1" height="1" fill="#ffff00"/><rect x="76" y="247" width="1" height="1" fill="#a09a20"/><rect x="78" y="247" width="1" height="1" fill="#a8a8f8"/><rect x="80" y="247" width="1" height="1" fill="#a8a8f8"/><rect x="70" y="249" width="1" height="1" fill="#ffff00"/><rect x="72" y="249" width="1" height="1" fill="#ffff00"/><rect x="74" y="249" width="1" height="1" fill="#a8a8f8"/><rect x="76" y="249" width="1" height="1" fill="#a8a8f8"/><rect x="78" y="249" width="1" height="1" fill="#a09a20"/><rect x="80" y="249" width="1" height="1" fill="#a8a8f8"/><rect x="70" y="251" width="1" height="1" fill="#ffff00"/><rect x="72" y="251" width="1" height="1" fill="#ffff00"/><rect x="74" y="251" width="1" height="1" fill="#a8a8f8"/><rect x="76" y="251" width="1" height="1" fill="#a8a8f8"/><rect x="78" y="251" width="1" height="1" fill="#a8a8f8"/><rect x="80" y="251" width="1" height="1" fill="#a8a8f8"/><path d="M58 265.5 H67" stroke="#777" stroke-width="1" stroke-dasharray="1 1"/><rect x="71" y="260" width="13" height="13" fill="#000" opacity="0.15"/><rect x="70" y="259" width="13" height="13" fill="#000" opacity="0.15"/><rect x="69" y="258" width="13" height="13" fill="#000"/><rect x="70" y="259" width="11" height="11" fill="#7c7c7c"/><rect x="70" y="259" width="1" height="1" fill="#a8a8f8"/><rect x="72" y="259" width="1" height="1" fill="#a8a8f8"/><rect x="74" y="259" width="1" height="1" fill="#a8a8f8"/><rect x="76" y="259" width="1" height="1" fill="#ffff00"/><rect x="78" y="259" width="1" height="1" fill="#ffff00"/><rect x="80" y="259" width="1" height="1" fill="#ffff00"/><rect x="70" y="261" width="1" height="1" fill="#a8a8f8"/><rect x="72" y="261" width="1" height="1" fill="#a8a8f8"/><rect x="74" y="261" width="1" height="1" fill="#a8a8f8"/><rect x="76" y="261" width="1" height="1" fill="#ffff00"/><rect x="78" y="261" width="1" height="1" fill="#ffff00"/><rect x="80" y="261" width="1" height="1" fill="#ffff00"/><rect x="70" y="263" width="1" height="1" fill="#a8a8f8"/><rect x="72" y="263" width="1" height="1" fill="#ffff00"/><rect x="74" y="263" width="1" height="1" fill="#a09a20"/><rect x="76" y="263" width="1" height="1" fill="#ffff00"/><rect x="78" y="263" width="1" height="1" fill="#ffff00"/><rect x="80" y="263" width="1" height="1" fill="#a8a8f8"/><rect x="70" y="265" width="1" height="1" fill="#ffff00"/><rect x="72" y="265" width="1" height="1" fill="#ffff00"/><rect x="74" y="265" width="1" height="1" fill="#ffff00"/><rect x="76" y="265" width="1" height="1" fill="#a09a20"/><rect x="78" y="265" width="1" height="1" fill="#a8a8f8"/><rect x="80" y="265" width="1" height="1" fill="#a8a8f8"/><rect x="70" y="267" width="1" height="1" fill="#ffff00"/><rect x="72" y="267" width="1" height="1" fill="#ffff00"/><rect x="74" y="267" width="1" height="1" fill="#a8a8f8"/><rect x="76" y="267" width="1" height="1" fill="#a8a8f8"/><rect x="78" y="267" width="1" height="1" fill="#a09a20"/><rect x="80" y="267" width="1" height="1" fill="#a8a8f8"/><rect x="70" y="269" width="1" height="1" fill="#ffff00"/><rect x="72" y="269" width="1" height="1" fill="#ffff00"/><rect x="74" y="269" width="1" height="1" fill="#a8a8f8"/><rect x="76" y="269" width="1" height="1" fill="#a8a8f8"/><rect x="78" y="269" width="1" height="1" fill="#a8a8f8"/><rect x="80" y="269" width="1" height="1" fill="#a8a8f8"/><path d="M72 260 H79 V262 H75 V264 H78 V266 H75 V270 H72Z" fill="#fff"/><path d="M58 283.5 H67" stroke="#777" stroke-width="1" stroke-dasharray="1 1"/><rect x="71" y="278" width="13" height="13" fill="#000" opacity="0.15"/><rect x="70" y="277" width="13" height="13" fill="#000" opacity="0.15"/><rect x="69" y="276" width="13" height="13" fill="#000"/><rect x="70" y="277" width="11" height="11" fill="#7c7c7c"/><rect x="70" y="277" width="1" height="1" fill="#a8a8f8"/><rect x="72" y="277" width="1" height="1" fill="#a8a8f8"/><rect x="74" y="277" width="1" height="1" fill="#a8a8f8"/><rect x="76" y="277" width="1" height="1" fill="#ffff00"/><rect x="78" y="277" width="1" height="1" fill="#ffff00"/><rect x="80" y="277" width="1" height="1" fill="#ffff00"/><rect x="70" y="279" width="1" height="1" fill="#a8a8f8"/><rect x="72" y="279" width="1" height="1" fill="#a8a8f8"/><rect x="74" y="279" width="1" height="1" fill="#a8a8f8"/><rect x="76" y="279" width="1" height="1" fill="#ffff00"/><rect x="78" y="279" width="1" height="1" fill="#ffff00"/><rect x="80" y="279" width="1" height="1" fill="#ffff00"/><rect x="70" y="281" width="1" height="1" fill="#a8a8f8"/><rect x="72" y="281" width="1" height="1" fill="#ffff00"/><rect x="74" y="281" width="1" height="1" fill="#a09a20"/><rect x="76" y="281" width="1" height="1" fill="#ffff00"/><rect x="78" y="281" width="1" height="1" fill="#ffff00"/><rect x="80" y="281" width="1" height="1" fill="#a8a8f8"/><rect x="70" y="283" width="1" height="1" fill="#ffff00"/><rect x="72" y="283" width="1" height="1" fill="#ffff00"/><rect x="74" y="283" width="1" height="1" fill="#ffff00"/><rect x="76" y="283" width="1" height="1" fill="#a09a20"/><rect x="78" y="283" width="1" height="1" fill="#a8a8f8"/><rect x="80" y="283" width="1" height="1" fill="#a8a8f8"/><rect x="70" y="285" width="1" height="1" fill="#ffff00"/><rect x="72" y="285" width="1" height="1" fill="#ffff00"/><rect x="74" y="285" width="1" height="1" fill="#a8a8f8"/><rect x="76" y="285" width="1" height="1" fill="#a8a8f8"/><rect x="78" y="285" width="1" height="1" fill="#a09a20"/><rect x="80" y="285" width="1" height="1" fill="#a8a8f8"/><rect x="70" y="287" width="1" height="1" fill="#ffff00"/><rect x="72" y="287" width="1" height="1" fill="#ffff00"/><rect x="74" y="287" width="1" height="1" fill="#a8a8f8"/><rect x="76" y="287" width="1" height="1" fill="#a8a8f8"/><rect x="78" y="287" width="1" height="1" fill="#a8a8f8"/><rect x="80" y="287" width="1" height="1" fill="#a8a8f8"/><path d="M58 301.5 H67" stroke="#777" stroke-width="1" stroke-dasharray="1 1"/><rect x="71" y="296" width="13" height="13" fill="#000" opacity="0.15"/><rect x="70" y="295" width="13" height="13" fill="#000" opacity="0.15"/><rect x="69" y="294" width="13" height="13" fill="#000"/><rect x="70" y="295" width="11" height="11" fill="#7c7c7c"/><rect x="70" y="295" width="1" height="1" fill="#a8a8f8"/><rect x="72" y="295" width="1" height="1" fill="#a8a8f8"/><rect x="74" y="295" width="1" height="1" fill="#a8a8f8"/><rect x="76" y="295" width="1" height="1" fill="#ffff00"/><rect x="78" y="295" width="1" height="1" fill="#ffff00"/><rect x="80" y="295" width="1" height="1" fill="#ffff00"/><rect x="70" y="297" width="1" height="1" fill="#a8a8f8"/><rect x="72" y="297" width="1" height="1" fill="#a8a8f8"/><rect x="74" y="297" width="1" height="1" fill="#a8a8f8"/><rect x="76" y="297" width="1" height="1" fill="#ffff00"/><rect x="78" y="297" width="1" height="1" fill="#ffff00"/><rect x="80" y="297" width="1" height="1" fill="#ffff00"/><rect x="70" y="299" width="1" height="1" fill="#a8a8f8"/><rect x="72" y="299" width="1" height="1" fill="#ffff00"/><rect x="74" y="299" width="1" height="1" fill="#a09a20"/><rect x="76" y="299" width="1" height="1" fill="#ffff00"/><rect x="78" y="299" width="1" height="1" fill="#ffff00"/><rect x="80" y="299" width="1" height="1" fill="#a8a8f8"/><rect x="70" y="301" width="1" height="1" fill="#ffff00"/><rect x="72" y="301" width="1" height="1" fill="#ffff00"/><rect x="74" y="301" width="1" height="1" fill="#ffff00"/><rect x="76" y="301" width="1" height="1" fill="#a09a20"/><rect x="78" y="301" width="1" height="1" fill="#a8a8f8"/><rect x="80" y="301" width="1" height="1" fill="#a8a8f8"/><rect x="70" y="303" width="1" height="1" fill="#ffff00"/><rect x="72" y="303" width="1" height="1" fill="#ffff00"/><rect x="74" y="303" width="1" height="1" fill="#a8a8f8"/><rect x="76" y="303" width="1" height="1" fill="#a8a8f8"/><rect x="78" y="303" width="1" height="1" fill="#a09a20"/><rect x="80" y="303" width="1" height="1" fill="#a8a8f8"/><rect x="70" y="305" width="1" height="1" fill="#ffff00"/><rect x="72" y="305" width="1" height="1" fill="#ffff00"/><rect x="74" y="305" width="1" height="1" fill="#a8a8f8"/><rect x="76" y="305" width="1" height="1" fill="#a8a8f8"/><rect x="78" y="305" width="1" height="1" fill="#a8a8f8"/><rect x="80" y="305" width="1" height="1" fill="#a8a8f8"/><path d="M58 319.5 H67" stroke="#777" stroke-width="1" stroke-dasharray="1 1"/><rect x="71" y="314" width="13" height="13" fill="#000" opacity="0.15"/><rect x="70" y="313" width="13" height="13" fill="#000" opacity="0.15"/><rect x="69" y="312" width="13" height="13" fill="#000"/><rect x="70" y="313" width="11" height="11" fill="#7c7c7c"/><rect x="70" y="313" width="1" height="1" fill="#a8a8f8"/><rect x="72" y="313" width="1" height="1" fill="#a8a8f8"/><rect x="74" y="313" width="1" height="1" fill="#a8a8f8"/><rect x="76" y="313" width="1" height="1" fill="#ffff00"/><rect x="78" y="313" width="1" height="1" fill="#ffff00"/><rect x="80" y="313" width="1" height="1" fill="#ffff00"/><rect x="70" y="315" width="1" height="1" fill="#a8a8f8"/><rect x="72" y="315" width="1" height="1" fill="#a8a8f8"/><rect x="74" y="315" width="1" height="1" fill="#a8a8f8"/><rect x="76" y="315" width="1" height="1" fill="#ffff00"/><rect x="78" y="315" width="1" height="1" fill="#ffff00"/><rect x="80" y="315" width="1" height="1" fill="#ffff00"/><rect x="70" y="317" width="1" height="1" fill="#a8a8f8"/><rect x="72" y="317" width="1" height="1" fill="#ffff00"/><rect x="74" y="317" width="1" height="1" fill="#a09a20"/><rect x="76" y="317" width="1" height="1" fill="#ffff00"/><rect x="78" y="317" width="1" height="1" fill="#ffff00"/><rect x="80" y="317" width="1" height="1" fill="#a8a8f8"/><rect x="70" y="319" width="1" height="1" fill="#ffff00"/><rect x="72" y="319" width="1" height="1" fill="#ffff00"/><rect x="74" y="319" width="1" height="1" fill="#ffff00"/><rect x="76" y="319" width="1" height="1" fill="#a09a20"/><rect x="78" y="319" width="1" height="1" fill="#a8a8f8"/><rect x="80" y="319" width="1" height="1" fill="#a8a8f8"/><rect x="70" y="321" width="1" height="1" fill="#ffff00"/><rect x="72" y="321" width="1" height="1" fill="#ffff00"/><rect x="74" y="321" width="1" height="1" fill="#a8a8f8"/><rect x="76" y="321" width="1" height="1" fill="#a8a8f8"/><rect x="78" y="321" width="1" height="1" fill="#a09a20"/><rect x="80" y="321" width="1" height="1" fill="#a8a8f8"/><rect x="70" y="323" width="1" height="1" fill="#ffff00"/><rect x="72" y="323" width="1" height="1" fill="#ffff00"/><rect x="74" y="323" width="1" height="1" fill="#a8a8f8"/><rect x="76" y="323" width="1" height="1" fill="#a8a8f8"/><rect x="78" y="323" width="1" height="1" fill="#a8a8f8"/><rect x="80" y="323" width="1" height="1" fill="#a8a8f8"/><path d="M58 337.5 H67" stroke="#777" stroke-width="1" stroke-dasharray="1 1"/><rect x="71" y="332" width="13" height="13" fill="#000" opacity="0.15"/><rect x="70" y="331" width="13" height="13" fill="#000" opacity="0.15"/><rect x="69" y="330" width="13" height="13" fill="#000"/><rect x="70" y="331" width="11" height="11" fill="#7c7c7c"/><rect x="70" y="331" width="1" height="1" fill="#a8a8f8"/><rect x="72" y="331" width="1" height="1" fill="#a8a8f8"/><rect x="74" y="331" width="1" height="1" fill="#a8a8f8"/><rect x="76" y="331" width="1" height="1" fill="#ffff00"/><rect x="78" y="331" width="1" height="1" fill="#ffff00"/><rect x="80" y="331" width="1" height="1" fill="#ffff00"/><rect x="70" y="333" width="1" height="1" fill="#a8a8f8"/><rect x="72" y="333" width="1" height="1" fill="#a8a8f8"/><rect x="74" y="333" width="1" height="1" fill="#a8a8f8"/><rect x="76" y="333" width="1" height="1" fill="#ffff00"/><rect x="78" y="333" width="1" height="1" fill="#ffff00"/><rect x="80" y="333" width="1" height="1" fill="#ffff00"/><rect x="70" y="335" width="1" height="1" fill="#a8a8f8"/><rect x="72" y="335" width="1" height="1" fill="#ffff00"/><rect x="74" y="335" width="1" height="1" fill="#a09a20"/><rect x="76" y="335" width="1" height="1" fill="#ffff00"/><rect x="78" y="335" width="1" height="1" fill="#ffff00"/><rect x="80" y="335" width="1" height="1" fill="#a8a8f8"/><rect x="70" y="337" width="1" height="1" fill="#ffff00"/><rect x="72" y="337" width="1" height="1" fill="#ffff00"/><rect x="74" y="337" width="1" height="1" fill="#ffff00"/><rect x="76" y="337" width="1" height="1" fill="#a09a20"/><rect x="78" y="337" width="1" height="1" fill="#a8a8f8"/><rect x="80" y="337" width="1" height="1" fill="#a8a8f8"/><rect x="70" y="339" width="1" height="1" fill="#ffff00"/><rect x="72" y="339" width="1" height="1" fill="#ffff00"/><rect x="74" y="339" width="1" height="1" fill="#a8a8f8"/><rect x="76" y="339" width="1" height="1" fill="#a8a8f8"/><rect x="78" y="339" width="1" height="1" fill="#a09a20"/><rect x="80" y="339" width="1" height="1" fill="#a8a8f8"/><rect x="70" y="341" width="1" height="1" fill="#ffff00"/><rect x="72" y="341" width="1" height="1" fill="#ffff00"/><rect x="74" y="341" width="1" height="1" fill="#a8a8f8"/><rect x="76" y="341" width="1" height="1" fill="#a8a8f8"/><rect x="78" y="341" width="1" height="1" fill="#a8a8f8"/><rect x="80" y="341" width="1" height="1" fill="#a8a8f8"/><path d="M72 332 H79 V334 H75 V336 H78 V338 H75 V342 H72Z" fill="#fff"/><path d="M58 355.5 H67" stroke="#777" stroke-width="1" stroke-dasharray="1 1"/><rect x="71" y="350" width="13" height="13" fill="#000" opacity="0.15"/><rect x="70" y="349" width="13" height="13" fill="#000" opacity="0.15"/><rect x="69" y="348" width="13" height="13" fill="#000"/><rect x="70" y="349" width="11" height="11" fill="#7c7c7c"/><rect x="70" y="349" width="1" height="1" fill="#a8a8f8"/><rect x="72" y="349" width="1" height="1" fill="#a8a8f8"/><rect x="74" y="349" width="1" height="1" fill="#a8a8f8"/><rect x="76" y="349" width="1" height="1" fill="#ffff00"/><rect x="78" y="349" width="1" height="1" fill="#ffff00"/><rect x="80" y="349" width="1" height="1" fill="#ffff00"/><rect x="70" y="351" width="1" height="1" fill="#a8a8f8"/><rect x="72" y="351" width="1" height="1" fill="#a8a8f8"/><rect x="74" y="351" width="1" height="1" fill="#a8a8f8"/><rect x="76" y="351" width="1" height="1" fill="#ffff00"/><rect x="78" y="351" width="1" height="1" fill="#ffff00"/><rect x="80" y="351" width="1" height="1" fill="#ffff00"/><rect x="70" y="353" width="1" height="1" fill="#a8a8f8"/><rect x="72" y="353" width="1" height="1" fill="#ffff00"/><rect x="74" y="353" width="1" height="1" fill="#a09a20"/><rect x="76" y="353" width="1" height="1" fill="#ffff00"/><rect x="78" y="353" width="1" height="1" fill="#ffff00"/><rect x="80" y="353" width="1" height="1" fill="#a8a8f8"/><rect x="70" y="355" width="1" height="1" fill="#ffff00"/><rect x="72" y="355" width="1" height="1" fill="#ffff00"/><rect x="74" y="355" width="1" height="1" fill="#ffff00"/><rect x="76" y="355" width="1" height="1" fill="#a09a20"/><rect x="78" y="355" width="1" height="1" fill="#a8a8f8"/><rect x="80" y="355" width="1" height="1" fill="#a8a8f8"/><rect x="70" y="357" width="1" height="1" fill="#ffff00"/><rect x="72" y="357" width="1" height="1" fill="#ffff00"/><rect x="74" y="357" width="1" height="1" fill="#a8a8f8"/><rect x="76" y="357" width="1" height="1" fill="#a8a8f8"/><rect x="78" y="357" width="1" height="1" fill="#a09a20"/><rect x="80" y="357" width="1" height="1" fill="#a8a8f8"/><rect x="70" y="359" width="1" height="1" fill="#ffff00"/><rect x="72" y="359" width="1" height="1" fill="#ffff00"/><rect x="74" y="359" width="1" height="1" fill="#a8a8f8"/><rect x="76" y="359" width="1" height="1" fill="#a8a8f8"/><rect x="78" y="359" width="1" height="1" fill="#a8a8f8"/><rect x="80" y="359" width="1" height="1" fill="#a8a8f8"/><path d="M72 350 H79 V352 H75 V354 H78 V356 H75 V360 H72Z" fill="#fff"/><path d="M58 373.5 H67" stroke="#777" stroke-width="1" stroke-dasharray="1 1"/><rect x="71" y="368" width="13" height="13" fill="#000" opacity="0.15"/><rect x="70" y="367" width="13" height="13" fill="#000" opacity="0.15"/><rect x="69" y="366" width="13" height="13" fill="#000"/><rect x="70" y="367" width="11" height="11" fill="#7c7c7c"/><rect x="70" y="367" width="1" height="1" fill="#a8a8f8"/><rect x="72" y="367" width="1" height="1" fill="#a8a8f8"/><rect x="74" y="367" width="1" height="1" fill="#a8a8f8"/><rect x="76" y="367" width="1" height="1" fill="#ffff00"/><rect x="78" y="367" width="1" height="1" fill="#ffff00"/><rect x="80" y="367" width="1" height="1" fill="#ffff00"/><rect x="70" y="369" width="1" height="1" fill="#a8a8f8"/><rect x="72" y="369" width="1" height="1" fill="#a8a8f8"/><rect x="74" y="369" width="1" height="1" fill="#a8a8f8"/><rect x="76" y="369" width="1" height="1" fill="#ffff00"/><rect x="78" y="369" width="1" height="1" fill="#ffff00"/><rect x="80" y="369" width="1" height="1" fill="#ffff00"/><rect x="70" y="371" width="1" height="1" fill="#a8a8f8"/><rect x="72" y="371" width="1" height="1" fill="#ffff00"/><rect x="74" y="371" width="1" height="1" fill="#a09a20"/><rect x="76" y="371" width="1" height="1" fill="#ffff00"/><rect x="78" y="371" width="1" height="1" fill="#ffff00"/><rect x="80" y="371" width="1" height="1" fill="#a8a8f8"/><rect x="70" y="373" width="1" height="1" fill="#ffff00"/><rect x="72" y="373" width="1" height="1" fill="#ffff00"/><rect x="74" y="373" width="1" height="1" fill="#ffff00"/><rect x="76" y="373" width="1" height="1" fill="#a09a20"/><rect x="78" y="373" width="1" height="1" fill="#a8a8f8"/><rect x="80" y="373" width="1" height="1" fill="#a8a8f8"/><rect x="70" y="375" width="1" height="1" fill="#ffff00"/><rect x="72" y="375" width="1" height="1" fill="#ffff00"/><rect x="74" y="375" width="1" height="1" fill="#a8a8f8"/><rect x="76" y="375" width="1" height="1" fill="#a8a8f8"/><rect x="78" y="375" width="1" height="1" fill="#a09a20"/><rect x="80" y="375" width="1" height="1" fill="#a8a8f8"/><rect x="70" y="377" width="1" height="1" fill="#ffff00"/><rect x="72" y="377" width="1" height="1" fill="#ffff00"/><rect x="74" y="377" width="1" height="1" fill="#a8a8f8"/><rect x="76" y="377" width="1" height="1" fill="#a8a8f8"/><rect x="78" y="377" width="1" height="1" fill="#a8a8f8"/><rect x="80" y="377" width="1" height="1" fill="#a8a8f8"/><path d="M58 391.5 H67" stroke="#777" stroke-width="1" stroke-dasharray="1 1"/><rect x="71" y="386" width="13" height="13" fill="#000" opacity="0.15"/><rect x="70" y="385" width="13" height="13" fill="#000" opacity="0.15"/><rect x="69" y="384" width="13" height="13" fill="#000"/><rect x="70" y="385" width="11" height="11" fill="#7c7c7c"/><rect x="70" y="385" width="1" height="1" fill="#a8a8f8"/><rect x="72" y="385" width="1" height="1" fill="#a8a8f8"/><rect x="74" y="385" width="1" height="1" fill="#a8a8f8"/><rect x="76" y="385" width="1" height="1" fill="#ffff00"/><rect x="78" y="385" width="1" height="1" fill="#ffff00"/><rect x="80" y="385" width="1" height="1" fill="#ffff00"/><rect x="70" y="387" width="1" height="1" fill="#a8a8f8"/><rect x="72" y="387" width="1" height="1" fill="#a8a8f8"/><rect x="74" y="387" width="1" height="1" fill="#a8a8f8"/><rect x="76" y="387" width="1" height="1" fill="#ffff00"/><rect x="78" y="387" width="1" height="1" fill="#ffff00"/><rect x="80" y="387" width="1" height="1" fill="#ffff00"/><rect x="70" y="389" width="1" height="1" fill="#a8a8f8"/><rect x="72" y="389" width="1" height="1" fill="#ffff00"/><rect x="74" y="389" width="1" height="1" fill="#a09a20"/><rect x="76" y="389" width="1" height="1" fill="#ffff00"/><rect x="78" y="389" width="1" height="1" fill="#ffff00"/><rect x="80" y="389" width="1" height="1" fill="#a8a8f8"/><rect x="70" y="391" width="1" height="1" fill="#ffff00"/><rect x="72" y="391" width="1" height="1" fill="#ffff00"/><rect x="74" y="391" width="1" height="1" fill="#ffff00"/><rect x="76" y="391" width="1" height="1" fill="#a09a20"/><rect x="78" y="391" width="1" height="1" fill="#a8a8f8"/><rect x="80" y="391" width="1" height="1" fill="#a8a8f8"/><rect x="70" y="393" width="1" height="1" fill="#ffff00"/><rect x="72" y="393" width="1" height="1" fill="#ffff00"/><rect x="74" y="393" width="1" height="1" fill="#a8a8f8"/><rect x="76" y="393" width="1" height="1" fill="#a8a8f8"/><rect x="78" y="393" width="1" height="1" fill="#a09a20"/><rect x="80" y="393" width="1" height="1" fill="#a8a8f8"/><rect x="70" y="395" width="1" height="1" fill="#ffff00"/><rect x="72" y="395" width="1" height="1" fill="#ffff00"/><rect x="74" y="395" width="1" height="1" fill="#a8a8f8"/><rect x="76" y="395" width="1" height="1" fill="#a8a8f8"/><rect x="78" y="395" width="1" height="1" fill="#a8a8f8"/><rect x="80" y="395" width="1" height="1" fill="#a8a8f8"/><path d="M58 409.5 H67" stroke="#777" stroke-width="1" stroke-dasharray="1 1"/><rect x="71" y="404" width="13" height="13" fill="#000" opacity="0.15"/><rect x="70" y="403" width="13" height="13" fill="#000" opacity="0.15"/><rect x="69" y="402" width="13" height="13" fill="#000"/><rect x="70" y="403" width="11" height="11" fill="#7c7c7c"/><rect x="70" y="403" width="1" height="1" fill="#a8a8f8"/><rect x="72" y="403" width="1" height="1" fill="#a8a8f8"/><rect x="74" y="403" width="1" height="1" fill="#a8a8f8"/><rect x="76" y="403" width="1" height="1" fill="#ffff00"/><rect x="78" y="403" width="1" height="1" fill="#ffff00"/><rect x="80" y="403" width="1" height="1" fill="#ffff00"/><rect x="70" y="405" width="1" height="1" fill="#a8a8f8"/><rect x="72" y="405" width="1" height="1" fill="#a8a8f8"/><rect x="74" y="405" width="1" height="1" fill="#a8a8f8"/><rect x="76" y="405" width="1" height="1" fill="#ffff00"/><rect x="78" y="405" width="1" height="1" fill="#ffff00"/><rect x="80" y="405" width="1" height="1" fill="#ffff00"/><rect x="70" y="407" width="1" height="1" fill="#a8a8f8"/><rect x="72" y="407" width="1" height="1" fill="#ffff00"/><rect x="74" y="407" width="1" height="1" fill="#a09a20"/><rect x="76" y="407" width="1" height="1" fill="#ffff00"/><rect x="78" y="407" width="1" height="1" fill="#ffff00"/><rect x="80" y="407" width="1" height="1" fill="#a8a8f8"/><rect x="70" y="409" width="1" height="1" fill="#ffff00"/><rect x="72" y="409" width="1" height="1" fill="#ffff00"/><rect x="74" y="409" width="1" height="1" fill="#ffff00"/><rect x="76" y="409" width="1" height="1" fill="#a09a20"/><rect x="78" y="409" width="1" height="1" fill="#a8a8f8"/><rect x="80" y="409" width="1" height="1" fill="#a8a8f8"/><rect x="70" y="411" width="1" height="1" fill="#ffff00"/><rect x="72" y="411" width="1" height="1" fill="#ffff00"/><rect x="74" y="411" width="1" height="1" fill="#a8a8f8"/><rect x="76" y="411" width="1" height="1" fill="#a8a8f8"/><rect x="78" y="411" width="1" height="1" fill="#a09a20"/><rect x="80" y="411" width="1" height="1" fill="#a8a8f8"/><rect x="70" y="413" width="1" height="1" fill="#ffff00"/><rect x="72" y="413" width="1" height="1" fill="#ffff00"/><rect x="74" y="413" width="1" height="1" fill="#a8a8f8"/><rect x="76" y="413" width="1" height="1" fill="#a8a8f8"/><rect x="78" y="413" width="1" height="1" fill="#a8a8f8"/><rect x="80" y="413" width="1" height="1" fill="#a8a8f8"/><path d="M58 427.5 H67" stroke="#777" stroke-width="1" stroke-dasharray="1 1"/><rect x="71" y="422" width="13" height="13" fill="#000" opacity="0.15"/><rect x="70" y="421" width="13" height="13" fill="#000" opacity="0.15"/><rect x="69" y="420" width="13" height="13" fill="#000"/><rect x="70" y="421" width="11" height="11" fill="#7c7c7c"/><rect x="70" y="421" width="1" height="1" fill="#a8a8f8"/><rect x="72" y="421" width="1" height="1" fill="#a8a8f8"/><rect x="74" y="421" width="1" height="1" fill="#a8a8f8"/><rect x="76" y="421" width="1" height="1" fill="#ffff00"/><rect x="78" y="421" width="1" height="1" fill="#ffff00"/><rect x="80" y="421" width="1" height="1" fill="#ffff00"/><rect x="70" y="423" width="1" height="1" fill="#a8a8f8"/><rect x="72" y="423" width="1" height="1" fill="#a8a8f8"/><rect x="74" y="423" width="1" height="1" fill="#a8a8f8"/><rect x="76" y="423" width="1" height="1" fill="#ffff00"/><rect x="78" y="423" width="1" height="1" fill="#ffff00"/><rect x="80" y="423" width="1" height="1" fill="#ffff00"/><rect x="70" y="425" width="1" height="1" fill="#a8a8f8"/><rect x="72" y="425" width="1" height="1" fill="#ffff00"/><rect x="74" y="425" width="1" height="1" fill="#a09a20"/><rect x="76" y="425" width="1" height="1" fill="#ffff00"/><rect x="78" y="425" width="1" height="1" fill="#ffff00"/><rect x="80" y="425" width="1" height="1" fill="#a8a8f8"/><rect x="70" y="427" width="1" height="1" fill="#ffff00"/><rect x="72" y="427" width="1" height="1" fill="#ffff00"/><rect x="74" y="427" width="1" height="1" fill="#ffff00"/><rect x="76" y="427" width="1" height="1" fill="#a09a20"/><rect x="78" y="427" width="1" height="1" fill="#a8a8f8"/><rect x="80" y="427" width="1" height="1" fill="#a8a8f8"/><rect x="70" y="429" width="1" height="1" fill="#ffff00"/><rect x="72" y="429" width="1" height="1" fill="#ffff00"/><rect x="74" y="429" width="1" height="1" fill="#a8a8f8"/><rect x="76" y="429" width="1" height="1" fill="#a8a8f8"/><rect x="78" y="429" width="1" height="1" fill="#a09a20"/><rect x="80" y="429" width="1" height="1" fill="#a8a8f8"/><rect x="70" y="431" width="1" height="1" fill="#ffff00"/><rect x="72" y="431" width="1" height="1" fill="#ffff00"/><rect x="74" y="431" width="1" height="1" fill="#a8a8f8"/><rect x="76" y="431" width="1" height="1" fill="#a8a8f8"/><rect x="78" y="431" width="1" height="1" fill="#a8a8f8"/><rect x="80" y="431" width="1" height="1" fill="#a8a8f8"/><path d="M58 445.5 H67" stroke="#777" stroke-width="1" stroke-dasharray="1 1"/><rect x="71" y="440" width="13" height="13" fill="#000" opacity="0.15"/><rect x="70" y="439" width="13" height="13" fill="#000" opacity="0.15"/><rect x="69" y="438" width="13" height="13" fill="#000"/><rect x="70" y="439" width="11" height="11" fill="#7c7c7c"/><rect x="70" y="439" width="1" height="1" fill="#a8a8f8"/><rect x="72" y="439" width="1" height="1" fill="#a8a8f8"/><rect x="74" y="439" width="1" height="1" fill="#a8a8f8"/><rect x="76" y="439" width="1" height="1" fill="#ffff00"/><rect x="78" y="439" width="1" height="1" fill="#ffff00"/><rect x="80" y="439" width="1" height="1" fill="#ffff00"/><rect x="70" y="441" width="1" height="1" fill="#a8a8f8"/><rect x="72" y="441" width="1" height="1" fill="#a8a8f8"/><rect x="74" y="441" width="1" height="1" fill="#a8a8f8"/><rect x="76" y="441" width="1" height="1" fill="#ffff00"/><rect x="78" y="441" width="1" height="1" fill="#ffff00"/><rect x="80" y="441" width="1" height="1" fill="#ffff00"/><rect x="70" y="443" width="1" height="1" fill="#a8a8f8"/><rect x="72" y="443" width="1" height="1" fill="#ffff00"/><rect x="74" y="443" width="1" height="1" fill="#a09a20"/><rect x="76" y="443" width="1" height="1" fill="#ffff00"/><rect x="78" y="443" width="1" height="1" fill="#ffff00"/><rect x="80" y="443" width="1" height="1" fill="#a8a8f8"/><rect x="70" y="445" width="1" height="1" fill="#ffff00"/><rect x="72" y="445" width="1" height="1" fill="#ffff00"/><rect x="74" y="445" width="1" height="1" fill="#ffff00"/><rect x="76" y="445" width="1" height="1" fill="#a09a20"/><rect x="78" y="445" width="1" height="1" fill="#a8a8f8"/><rect x="80" y="445" width="1" height="1" fill="#a8a8f8"/><rect x="70" y="447" width="1" height="1" fill="#ffff00"/><rect x="72" y="447" width="1" height="1" fill="#ffff00"/><rect x="74" y="447" width="1" height="1" fill="#a8a8f8"/><rect x="76" y="447" width="1" height="1" fill="#a8a8f8"/><rect x="78" y="447" width="1" height="1" fill="#a09a20"/><rect x="80" y="447" width="1" height="1" fill="#a8a8f8"/><rect x="70" y="449" width="1" height="1" fill="#ffff00"/><rect x="72" y="449" width="1" height="1" fill="#ffff00"/><rect x="74" y="449" width="1" height="1" fill="#a8a8f8"/><rect x="76" y="449" width="1" height="1" fill="#a8a8f8"/><rect x="78" y="449" width="1" height="1" fill="#a8a8f8"/><rect x="80" y="449" width="1" height="1" fill="#a8a8f8"/><path d="M58 463.5 H67" stroke="#777" stroke-width="1" stroke-dasharray="1 1"/><rect x="71" y="458" width="13" height="13" fill="#000" opacity="0.15"/><rect x="70" y="457" width="13" height="13" fill="#000" opacity="0.15"/><rect x="69" y="456" width="13" height="13" fill="#000"/><rect x="70" y="457" width="11" height="11" fill="#7c7c7c"/><rect x="70" y="457" width="1" height="1" fill="#a8a8f8"/><rect x="72" y="457" width="1" height="1" fill="#a8a8f8"/><rect x="74" y="457" width="1" height="1" fill="#a8a8f8"/><rect x="76" y="457" width="1" height="1" fill="#ffff00"/><rect x="78" y="457" width="1" height="1" fill="#ffff00"/><rect x="80" y="457" width="1" height="1" fill="#ffff00"/><rect x="70" y="459" width="1" height="1" fill="#a8a8f8"/><rect x="72" y="459" width="1" height="1" fill="#a8a8f8"/><rect x="74" y="459" width="1" height="1" fill="#a8a8f8"/><rect x="76" y="459" width="1" height="1" fill="#ffff00"/><rect x="78" y="459" width="1" height="1" fill="#ffff00"/><rect x="80" y="459" width="1" height="1" fill="#ffff00"/><rect x="70" y="461" width="1" height="1" fill="#a8a8f8"/><rect x="72" y="461" width="1" height="1" fill="#ffff00"/><rect x="74" y="461" width="1" height="1" fill="#a09a20"/><rect x="76" y="461" width="1" height="1" fill="#ffff00"/><rect x="78" y="461" width="1" height="1" fill="#ffff00"/><rect x="80" y="461" width="1" height="1" fill="#a8a8f8"/><rect x="70" y="463" width="1" height="1" fill="#ffff00"/><rect x="72" y="463" width="1" height="1" fill="#ffff00"/><rect x="74" y="463" width="1" height="1" fill="#ffff00"/><rect x="76" y="463" width="1" height="1" fill="#a09a20"/><rect x="78" y="463" width="1" height="1" fill="#a8a8f8"/><rect x="80" y="463" width="1" height="1" fill="#a8a8f8"/><rect x="70" y="465" width="1" height="1" fill="#ffff00"/><rect x="72" y="465" width="1" height="1" fill="#ffff00"/><rect x="74" y="465" width="1" height="1" fill="#a8a8f8"/><rect x="76" y="465" width="1" height="1" fill="#a8a8f8"/><rect x="78" y="465" width="1" height="1" fill="#a09a20"/><rect x="80" y="465" width="1" height="1" fill="#a8a8f8"/><rect x="70" y="467" width="1" height="1" fill="#ffff00"/><rect x="72" y="467" width="1" height="1" fill="#ffff00"/><rect x="74" y="467" width="1" height="1" fill="#a8a8f8"/><rect x="76" y="467" width="1" height="1" fill="#a8a8f8"/><rect x="78" y="467" width="1" height="1" fill="#a8a8f8"/><rect x="80" y="467" width="1" height="1" fill="#a8a8f8"/><path d="M72 458 H79 V460 H75 V462 H78 V464 H75 V468 H72Z" fill="#fff"/><path d="M58 481.5 H67" stroke="#777" stroke-width="1" stroke-dasharray="1 1"/><rect x="71" y="476" width="13" height="13" fill="#000" opacity="0.15"/><rect x="70" y="475" width="13" height="13" fill="#000" opacity="0.15"/><rect x="69" y="474" width="13" height="13" fill="#000"/><rect x="70" y="475" width="11" height="11" fill="#7c7c7c"/><rect x="70" y="475" width="1" height="1" fill="#a8a8f8"/><rect x="72" y="475" width="1" height="1" fill="#a8a8f8"/><rect x="74" y="475" width="1" height="1" fill="#a8a8f8"/><rect x="76" y="475" width="1" height="1" fill="#ffff00"/><rect x="78" y="475" width="1" height="1" fill="#ffff00"/><rect x="80" y="475" width="1" height="1" fill="#ffff00"/><rect x="70" y="477" width="1" height="1" fill="#a8a8f8"/><rect x="72" y="477" width="1" height="1" fill="#a8a8f8"/><rect x="74" y="477" width="1" height="1" fill="#a8a8f8"/><rect x="76" y="477" width="1" height="1" fill="#ffff00"/><rect x="78" y="477" width="1" height="1" fill="#ffff00"/><rect x="80" y="477" width="1" height="1" fill="#ffff00"/><rect x="70" y="479" width="1" height="1" fill="#a8a8f8"/><rect x="72" y="479" width="1" height="1" fill="#ffff00"/><rect x="74" y="479" width="1" height="1" fill="#a09a20"/><rect x="76" y="479" width="1" height="1" fill="#ffff00"/><rect x="78" y="479" width="1" height="1" fill="#ffff00"/><rect x="80" y="479" width="1" height="1" fill="#a8a8f8"/><rect x="70" y="481" width="1" height="1" fill="#ffff00"/><rect x="72" y="481" width="1" height="1" fill="#ffff00"/><rect x="74" y="481" width="1" height="1" fill="#ffff00"/><rect x="76" y="481" width="1" height="1" fill="#a09a20"/><rect x="78" y="481" width="1" height="1" fill="#a8a8f8"/><rect x="80" y="481" width="1" height="1" fill="#a8a8f8"/><rect x="70" y="483" width="1" height="1" fill="#ffff00"/><rect x="72" y="483" width="1" height="1" fill="#ffff00"/><rect x="74" y="483" width="1" height="1" fill="#a8a8f8"/><rect x="76" y="483" width="1" height="1" fill="#a8a8f8"/><rect x="78" y="483" width="1" height="1" fill="#a09a20"/><rect x="80" y="483" width="1" height="1" fill="#a8a8f8"/><rect x="70" y="485" width="1" height="1" fill="#ffff00"/><rect x="72" y="485" width="1" height="1" fill="#ffff00"/><rect x="74" y="485" width="1" height="1" fill="#a8a8f8"/><rect x="76" y="485" width="1" height="1" fill="#a8a8f8"/><rect x="78" y="485" width="1" height="1" fill="#a8a8f8"/><rect x="80" y="485" width="1" height="1" fill="#a8a8f8"/></svg>
<div class="a nw tree" style="left:92px;top:112px">tb_qual_flag_h</div>
<div class="a nw tree" style="left:92px;top:130px">roughness_coefficient</div>
<div class="a nw tree" style="left:92px;top:148px">EASE_row_index</div>
<div class="a nw tree" style="left:92px;top:166px">tb_v_corrected</div>
<div class="a nw tree" style="left:92px;top:184px">tb_4_corrected</div>
<div class="a nw tree" style="left:92px;top:202px">longitude_centroid</div>
<div class="a nw tree" style="left:92px;top:220px">longitude</div>
<div class="a" style="left:91px;top:238px;width:40px;height:17px;background:#3399ff"></div><div class="a nw tree" style="left:92px;top:238px;color:#fff">latitude</div>
<div class="a nw tree" style="left:92px;top:256px">retrieval_qual_flag</div>
<div class="a nw tree" style="left:92px;top:274px">vegetation_water_content</div>
<div class="a nw tree" style="left:92px;top:292px">soil_moisture</div>
<div class="a nw tree" style="left:92px;top:310px">tb_3_corrected</div>
<div class="a nw tree" style="left:92px;top:328px">tb_qual_flag_3</div>
<div class="a nw tree" style="left:92px;top:346px">tb_qual_flag_4</div>
<div class="a nw tree" style="left:92px;top:364px">tb_h_corrected</div>
<div class="a nw tree" style="left:92px;top:382px">albedo</div>
<div class="a nw tree" style="left:92px;top:400px">tb_time_seconds</div>
<div class="a nw tree" style="left:92px;top:418px">soil_moisture_error</div>
<div class="a nw tree" style="left:92px;top:436px">radar_water_body_fraction</div>
<div class="a nw tree" style="left:92px;top:454px">tb_qual_flag_v</div>
<div class="a nw tree" style="left:92px;top:472px">latitude_centroid</div>

<div class="a" style="left:9px;top:497px;width:521px;height:21px;border:1px solid #8d949c;border-bottom:none;background:linear-gradient(180deg,#f2f2f2 0,#ececec 40%,#d8d8d8 100%)"></div>
<div class="a" style="left:9px;top:517px;width:521px;height:1px;background:#8d949c"></div>
<div class="a" style="left:129px;top:498px;width:121px;height:20px;background:#f0f0f0;border-left:1px solid #a0a0a0;border-right:1px solid #a0a0a0"></div>
<div class="a" style="left:371px;top:498px;width:1px;height:19px;background:#a8a8a8"></div><div class="a" style="left:372px;top:498px;width:1px;height:19px;background:#fff"></div>
<div class="a" style="left:492px;top:498px;width:1px;height:19px;background:#a8a8a8"></div><div class="a" style="left:493px;top:498px;width:1px;height:19px;background:#fff"></div>
<div class="a nw tabt" style="left:14px;top:499px">Navigation - [1] soi...</div>
<div class="a nw tabt" style="left:134px;top:499px">Colour Manipul...</div>
<div class="a nw tabt" style="left:255px;top:499px">Uncertainty Visual...</div>
<div class="a nw tabt" style="left:376px;top:499px">World View</div>
<svg class="a" style="left:236px;top:504px" width="9" height="8" viewBox="0 0 9 8"><path d="M1.5 1 L7.5 7 M7.5 1 L1.5 7" stroke="#555" stroke-width="2.2"/><path d="M1.5 1 L7.5 7 M7.5 1 L1.5 7" stroke="#ddd" stroke-width="0.7"/></svg>
<div class="a" style="left:514px;top:503px;width:10px;height:9px;border:1px solid #333;background:#f6f6f6"></div><div class="a" style="left:516px;top:508px;width:6px;height:2px;background:#222"></div>
<div class="a" style="left:9px;top:517px;width:521px;height:383px;border:1px solid #8d949c;border-top:none;background:#f0f0f0"></div>
<div class="a nw tree" style="left:15px;top:526px">Editor:</div>
<svg class="a" style="left:54px;top:530px" width="13" height="13" viewBox="0 0 13 13"><defs><linearGradient id="rg54" x1="0" y1="0" x2="1" y2="1"><stop offset="0" stop-color="#d8d8d8"/><stop offset="1" stop-color="#fbfbfb"/></linearGradient></defs><circle cx="6.5" cy="6.5" r="5.8" fill="url(#rg54)" stroke="#8e8f8f" stroke-width="1"/></svg><div class="a nw tree" style="left:70px;top:526px">Basic</div>
<svg class="a" style="left:105px;top:530px" width="13" height="13" viewBox="0 0 13 13"><defs><linearGradient id="rg105" x1="0" y1="0" x2="1" y2="1"><stop offset="0" stop-color="#d8d8d8"/><stop offset="1" stop-color="#fbfbfb"/></linearGradient></defs><circle cx="6.5" cy="6.5" r="5.8" fill="url(#rg105)" stroke="#8e8f8f" stroke-width="1"/><circle cx="6.5" cy="6.5" r="3.4" fill="#1e7fc8"/><circle cx="6" cy="5.6" r="1.5" fill="#8fd0ff"/></svg><div class="a nw tree" style="left:121px;top:526px">Sliders</div>
<svg class="a" style="left:164px;top:530px" width="13" height="13" viewBox="0 0 13 13"><defs><linearGradient id="rg164" x1="0" y1="0" x2="1" y2="1"><stop offset="0" stop-color="#d8d8d8"/><stop offset="1" stop-color="#fbfbfb"/></linearGradient></defs><circle cx="6.5" cy="6.5" r="5.8" fill="url(#rg164)" stroke="#8e8f8f" stroke-width="1"/></svg><div class="a nw tree" style="left:180px;top:526px">Table</div>
<div class="a" style="left:24px;top:553px;width:434px;height:240px;border:1px solid #3a3a3a;box-shadow:inset -1px -1px 0 #fff, 0 1px 0 #fff;background:#f0f0f0"></div>
<div class="a" style="left:353px;top:558px;width:101px;height:70px;background:#f4f4f4"></div>
<div class="a nw" style="left:355px;top:558px;font-size:11px;line-height:14px;color:#000">Name: soil_moisture</div>
<div class="a nw" style="left:355px;top:572px;font-size:11px;line-height:14px;color:#000">Unit: cm**3/cm**3</div>
<div class="a nw" style="left:355px;top:586px;font-size:11px;line-height:14px;color:#000">Min: -9999.0</div>
<div class="a nw" style="left:355px;top:600px;font-size:11px;line-height:14px;color:#000">Max: 0.908</div>
<div class="a nw" style="left:355px;top:614px;font-size:11px;line-height:14px;color:#800000">Rough statistics!</div>
<div class="a" style="left:24px;top:795px;width:434px;height:17px;background:#000"></div>
<svg class="a" style="left:448px;top:806px" width="16" height="40" viewBox="0 0 16 40"><path d="M8 2 L13 10 H3 Z" fill="#fff" stroke="#000" stroke-width="1"/><rect x="5" y="12" width="6" height="4" fill="#000"/><rect x="6" y="13" width="4" height="2" fill="#fff"/><rect x="5" y="18" width="6" height="7" fill="#000"/><rect x="6" y="19" width="2" height="2" fill="#fff"/><rect x="8" y="22" width="2" height="2" fill="#fff"/><rect x="5" y="27" width="6" height="9" fill="#000"/><rect x="6" y="29" width="3" height="2" fill="#fff"/><rect x="7" y="32" width="3" height="2" fill="#fff"/></svg>
<svg class="a" style="left:18px;top:878px" width="10" height="10" viewBox="0 0 10 10"><path d="M1.5 4.5 L5 1 L8.5 4.5 M1.5 8.5 L5 5 L8.5 8.5" stroke="#2a4aa8" stroke-width="1.4" fill="none"/></svg>
<div class="a nw tree" style="left:35px;top:877px;color:#000">More Options</div>
<div class="a" style="left:103px;top:885px;width:364px;height:1px;background:#a0a0a0"></div>
<svg class="a" style="left:499px;top:870px" width="24" height="24" viewBox="0 0 24 24"><defs><radialGradient id="hg" cx="0.4" cy="0.3" r="0.8"><stop offset="0" stop-color="#9ec4f2"/><stop offset="0.6" stop-color="#3f78c8"/><stop offset="1" stop-color="#24528f"/></radialGradient></defs><circle cx="12" cy="12" r="10.5" fill="url(#hg)" stroke="#2a4f8a" stroke-width="1"/><circle cx="12" cy="12" r="9" fill="none" stroke="#d8e6f8" stroke-width="1"/><text x="12" y="17.5" text-anchor="middle" font-size="15" font-weight="bold" fill="#fff" font-family="Liberation Sans">?</text></svg>
<svg class="a" style="left:470px;top:522px" width="56" height="190" viewBox="470 522 56 190"><path d="M476 530 Q483 524 489 529 Q493 535 488 541 Q484 545 478 543" fill="none" stroke="#333" stroke-width="4.2"/><path d="M476 530 Q483 524 489 529 Q493 535 488 541 Q484 545 478 543" fill="none" stroke="#9a9ae0" stroke-width="2.4"/><path d="M474.5 543 L481 538 L481 546.5Z" fill="#9a9ae0" stroke="#333" stroke-width="1"/><rect x="501" y="527" width="13" height="13" fill="#fff" stroke="#333"/><rect x="503.5" y="529.5" width="13" height="13" fill="#fff" stroke="#333"/><rect x="506" y="532" width="14" height="13" fill="#8c8c6c" stroke="#000"/><rect x="507.5" y="533.5" width="1.2" height="1.2" fill="#ffff00"/><rect x="507.5" y="535.7" width="1.2" height="1.2" fill="#a0a0f0"/><rect x="507.5" y="537.9" width="1.2" height="1.2" fill="#ffff00"/><rect x="507.5" y="540.1" width="1.2" height="1.2" fill="#a0a0f0"/><rect x="507.5" y="542.3" width="1.2" height="1.2" fill="#ffff00"/><rect x="509.9" y="533.5" width="1.2" height="1.2" fill="#a0a0f0"/><rect x="509.9" y="535.7" width="1.2" height="1.2" fill="#ffff00"/><rect x="509.9" y="537.9" width="1.2" height="1.2" fill="#a0a0f0"/><rect x="509.9" y="540.1" width="1.2" height="1.2" fill="#ffff00"/><rect x="509.9" y="542.3" width="1.2" height="1.2" fill="#a0a0f0"/><rect x="512.3" y="533.5" width="1.2" height="1.2" fill="#ffff00"/><rect x="512.3" y="535.7" width="1.2" height="1.2" fill="#a0a0f0"/><rect x="512.3" y="537.9" width="1.2" height="1.2" fill="#ffff00"/><rect x="512.3" y="540.1" width="1.2" height="1.2" fill="#a0a0f0"/><rect x="512.3" y="542.3" width="1.2" height="1.2" fill="#ffff00"/><rect x="514.7" y="533.5" width="1.2" height="1.2" fill="#a0a0f0"/><rect x="514.7" y="535.7" width="1.2" height="1.2" fill="#ffff00"/><rect x="514.7" y="537.9" width="1.2" height="1.2" fill="#a0a0f0"/><rect x="514.7" y="540.1" width="1.2" height="1.2" fill="#ffff00"/><rect x="514.7" y="542.3" width="1.2" height="1.2" fill="#a0a0f0"/><rect x="517.1" y="533.5" width="1.2" height="1.2" fill="#ffff00"/><rect x="517.1" y="535.7" width="1.2" height="1.2" fill="#a0a0f0"/><rect x="517.1" y="537.9" width="1.2" height="1.2" fill="#ffff00"/><rect x="517.1" y="540.1" width="1.2" height="1.2" fill="#a0a0f0"/><rect x="517.1" y="542.3" width="1.2" height="1.2" fill="#ffff00"/><path d="M517 531 V524.5 M515 526.5 L517 524.5 L519 526.5" stroke="#000" stroke-width="1" fill="none"/><path d="M478 550 H487 L490 553 V567 H478Z" fill="#fff" stroke="#777" stroke-width="0.8"/><path d="M474.5 556 H480 L481.5 554 H493.5 V569.5 H474.5Z" fill="#4d86cc" stroke="#2b5a98" stroke-width="1"/><path d="M475 558 H493" stroke="#9cc3f0" stroke-width="1.5"/><path d="M500.5 560 L503 556 H519 L521.5 560 V571 H500.5Z" fill="#f4f4f4" stroke="#444" stroke-width="1"/><rect x="503" y="564" width="12" height="4" fill="#fff" stroke="#444" stroke-width="0.8"/><rect x="515" y="564" width="3" height="4" fill="#444"/><path d="M505 556 Q508 549 516 551 L515 554 L521 552 L517 558 L516 555 Q510 554 508 558Z" fill="#3e8ed8" stroke="#1e5a98" stroke-width="0.8"/><text x="475" y="584.5" font-size="8.8" fill="#1e2a6a" font-family="Liberation Sans" letter-spacing="-0.5">95%</text><text x="499.5" y="584.5" font-size="8.8" fill="#1e2a6a" font-family="Liberation Sans" letter-spacing="-0.9">100%</text><path d="M476.5 586 V590 M490.5 586 V590" stroke="#666" stroke-width="0.8" stroke-dasharray="1 1"/><path d="M473.5 590.5 H493.5" stroke="#222266" stroke-width="1"/><path d="M476.5 591 L479.0 596 H474.0Z M490.5 591 L493.0 596 H488.0Z" fill="#c8c8f0" stroke="#222266" stroke-width="0.9"/><path d="M503.5 586 V590 M517.5 586 V590" stroke="#666" stroke-width="0.8" stroke-dasharray="1 1"/><path d="M500.5 590.5 H520.5" stroke="#222266" stroke-width="1"/><path d="M503.5 591 L506.0 596 H501.0Z M517.5 591 L520.0 596 H515.0Z" fill="#c8c8f0" stroke="#222266" stroke-width="0.9"/><path d="M484.5 612.5 L490.5 618.5" stroke="#6a3a1a" stroke-width="3.2" stroke-linecap="round"/><path d="M485.0 613.0 L490.0 618.0" stroke="#e8a060" stroke-width="1.6" stroke-linecap="round"/><circle cx="480.5" cy="608.5" r="6.2" fill="#c8c8e4" stroke="#222" stroke-width="1.3"/><path d="M477.0 608.5 H484.0" stroke="#000" stroke-width="1.8"/><path d="M480.5 605.0 V612.0" stroke="#000" stroke-width="1.8"/><path d="M510.5 612.5 L516.5 618.5" stroke="#6a3a1a" stroke-width="3.2" stroke-linecap="round"/><path d="M511.0 613.0 L516.0 618.0" stroke="#e8a060" stroke-width="1.6" stroke-linecap="round"/><circle cx="506.5" cy="608.5" r="6.2" fill="#c8c8e4" stroke="#222" stroke-width="1.3"/><path d="M503.0 608.5 H510.0" stroke="#000" stroke-width="1.8"/><path d="M491.5 603 V614 M489.5 605 L491.5 603 L493.5 605 M489.5 612 L491.5 614 L493.5 612" stroke="#222266" stroke-width="1" fill="none"/><path d="M517.5 603 V614 M515.5 605 L517.5 603 L519.5 605 M515.5 612 L517.5 614 L519.5 612" stroke="#222266" stroke-width="1" fill="none"/><path d="M484.5 640.5 L490.5 646.5" stroke="#6a3a1a" stroke-width="3.2" stroke-linecap="round"/><path d="M485.0 641.0 L490.0 646.0" stroke="#e8a060" stroke-width="1.6" stroke-linecap="round"/><circle cx="480.5" cy="636.5" r="6.2" fill="#c8c8e4" stroke="#222" stroke-width="1.3"/><path d="M477.0 636.5 H484.0" stroke="#000" stroke-width="1.8"/><path d="M480.5 633.0 V640.0" stroke="#000" stroke-width="1.8"/><path d="M510.5 640.5 L516.5 646.5" stroke="#6a3a1a" stroke-width="3.2" stroke-linecap="round"/><path d="M511.0 641.0 L516.0 646.0" stroke="#e8a060" stroke-width="1.6" stroke-linecap="round"/><circle cx="506.5" cy="636.5" r="6.2" fill="#c8c8e4" stroke="#222" stroke-width="1.3"/><path d="M503.0 636.5 H510.0" stroke="#000" stroke-width="1.8"/><path d="M474 648.5 H485 M476 646.5 L474 648.5 L476 650.5 M483 646.5 L485 648.5 L483 650.5" stroke="#222266" stroke-width="1" fill="none"/><path d="M500 648.5 H511 M502 646.5 L500 648.5 L502 650.5 M509 646.5 L511 648.5 L509 650.5" stroke="#222266" stroke-width="1" fill="none"/><text x="472.5" y="670.5" font-size="8.5" fill="#1e2a7a" font-family="Liberation Sans" letter-spacing="-0.2">Log</text><text x="485.5" y="674.5" font-size="8.5" fill="#1e2a7a" font-family="Liberation Sans" letter-spacing="-0.3">10</text><path d="M501 662.5 H521 M503 662 V667 M509 662 V667 M515 662 V667 M520 662 V667" stroke="#222266" stroke-width="0.9"/><path d="M503.5 667 L506.5 673 H500.5Z" fill="#c8c8f0" stroke="#222266" stroke-width="0.9"/><path d="M510.5 667 L513.5 673 H507.5Z" fill="#c8c8f0" stroke="#222266" stroke-width="0.9"/><path d="M517.5 667 L520.5 673 H514.5Z" fill="#c8c8f0" stroke="#222266" stroke-width="0.9"/><rect x="471.5" y="681.5" width="26" height="25.5" rx="1.5" fill="#fbd49a" stroke="#e3a860" stroke-width="1"/><defs><radialGradient id="ig" cx="0.45" cy="0.35" r="0.7"><stop offset="0" stop-color="#d8d4ec"/><stop offset="1" stop-color="#7a70a8"/></radialGradient></defs><circle cx="484.5" cy="694.5" r="10.5" fill="url(#ig)" stroke="#3a3050" stroke-width="1.4"/><circle cx="484.5" cy="688.5" r="1.6" fill="#f4f0ff" stroke="#3a3050" stroke-width="0.8"/><path d="M482 692 H486 V699 H488 V701 H481 V699 H483 V694 H482Z" fill="#f4f0ff" stroke="#3a3050" stroke-width="0.8"/></svg>

<div class="a" style="left:534px;top:90px;width:127px;height:21px;border:1px solid #8d949c;border-bottom:none;background:linear-gradient(180deg,#ffffff,#f4f4f4)"></div>
<svg class="a" style="left:537px;top:92px" width="17" height="17" viewBox="537 92 17 17" shape-rendering="crispEdges"><rect x="540" y="95" width="13" height="13" fill="#000" opacity="0.15"/><rect x="539" y="94" width="13" height="13" fill="#000" opacity="0.15"/><rect x="538" y="93" width="13" height="13" fill="#000"/><rect x="539" y="94" width="11" height="11" fill="#7c7c7c"/><rect x="539" y="94" width="1" height="1" fill="#a8a8f8"/><rect x="541" y="94" width="1" height="1" fill="#a8a8f8"/><rect x="543" y="94" width="1" height="1" fill="#a8a8f8"/><rect x="545" y="94" width="1" height="1" fill="#ffff00"/><rect x="547" y="94" width="1" height="1" fill="#ffff00"/><rect x="549" y="94" width="1" height="1" fill="#ffff00"/><rect x="539" y="96" width="1" height="1" fill="#a8a8f8"/><rect x="541" y="96" width="1" height="1" fill="#a8a8f8"/><rect x="543" y="96" width="1" height="1" fill="#a8a8f8"/><rect x="545" y="96" width="1" height="1" fill="#ffff00"/><rect x="547" y="96" width="1" height="1" fill="#ffff00"/><rect x="549" y="96" width="1" height="1" fill="#ffff00"/><rect x="539" y="98" width="1" height="1" fill="#a8a8f8"/><rect x="541" y="98" width="1" height="1" fill="#ffff00"/><rect x="543" y="98" width="1" height="1" fill="#a09a20"/><rect x="545" y="98" width="1" height="1" fill="#ffff00"/><rect x="547" y="98" width="1" height="1" fill="#ffff00"/><rect x="549" y="98" width="1" height="1" fill="#a8a8f8"/><rect x="539" y="100" width="1" height="1" fill="#ffff00"/><rect x="541" y="100" width="1" height="1" fill="#ffff00"/><rect x="543" y="100" width="1" height="1" fill="#ffff00"/><rect x="545" y="100" width="1" height="1" fill="#a09a20"/><rect x="547" y="100" width="1" height="1" fill="#a8a8f8"/><rect x="549" y="100" width="1" height="1" fill="#a8a8f8"/><rect x="539" y="102" width="1" height="1" fill="#ffff00"/><rect x="541" y="102" width="1" height="1" fill="#ffff00"/><rect x="543" y="102" width="1" height="1" fill="#a8a8f8"/><rect x="545" y="102" width="1" height="1" fill="#a8a8f8"/><rect x="547" y="102" width="1" height="1" fill="#a09a20"/><rect x="549" y="102" width="1" height="1" fill="#a8a8f8"/><rect x="539" y="104" width="1" height="1" fill="#ffff00"/><rect x="541" y="104" width="1" height="1" fill="#ffff00"/><rect x="543" y="104" width="1" height="1" fill="#a8a8f8"/><rect x="545" y="104" width="1" height="1" fill="#a8a8f8"/><rect x="547" y="104" width="1" height="1" fill="#a8a8f8"/><rect x="549" y="104" width="1" height="1" fill="#a8a8f8"/></svg>
<div class="a nw" style="left:557px;top:92px;font-size:11.3px;line-height:16px">[1] soil_moisture</div>
<svg class="a" style="left:648px;top:96px" width="9" height="8" viewBox="0 0 9 8"><path d="M1.5 1 L7.5 7 M7.5 1 L1.5 7" stroke="#555" stroke-width="2.2"/><path d="M1.5 1 L7.5 7 M7.5 1 L1.5 7" stroke="#ddd" stroke-width="0.7"/></svg>
<svg class="a" style="left:1614px;top:88px" width="74" height="19" viewBox="1614 88 74 19"><defs><linearGradient id="nb" x1="0" y1="0" x2="0" y2="1"><stop offset="0" stop-color="#fbfbfb"/><stop offset="0.45" stop-color="#efefef"/><stop offset="0.5" stop-color="#dedede"/><stop offset="1" stop-color="#f0f0f0"/></linearGradient></defs><rect x="1616.5" y="90.5" width="29" height="14" rx="2" fill="url(#nb)" stroke="#8a9098"/><path d="M1631 90.5 V104.5" stroke="#8a9098"/><path d="M1625.5 94 L1622 97.5 L1625.5 101Z M1636 94 L1639.5 97.5 L1636 101Z" fill="#a8a8a8"/><rect x="1649.5" y="90.5" width="15" height="14" rx="2" fill="url(#nb)" stroke="#454b52"/><path d="M1654 96 H1660 L1657 99.5Z" fill="#2c3840"/><rect x="1669.5" y="90.5" width="15" height="14" rx="2" fill="url(#nb)" stroke="#454b52"/><rect x="1673.5" y="95" width="7" height="5" fill="none" stroke="#2c3840" stroke-width="1.3"/><path d="M1673.5 95.6 H1680.5" stroke="#2c3840" stroke-width="1.5"/></svg>
<div class="a" style="left:534px;top:109px;width:1153px;height:791px;border:1px solid #8d949c"></div>
<div class="a" style="left:535px;top:110px;width:1151px;height:789px;background:#333"></div>
<div class="a" style="left:535px;top:110px;width:1151px;height:6px;background:linear-gradient(180deg,#e6b848 0,#d8aa40 30%,#9a7c38 60%,#5a4c30 85%,#333 100%);clip-path:polygon(0 0,100% 0,calc(100% - 6px) 100%,6px 100%)"></div>
<div class="a" style="left:535px;top:893px;width:1151px;height:6px;background:linear-gradient(0deg,#e6b848 0,#d8aa40 30%,#9a7c38 60%,#5a4c30 85%,#333 100%);clip-path:polygon(6px 0,calc(100% - 6px) 0,100% 100%,0 100%)"></div>
<div class="a" style="left:535px;top:110px;width:6px;height:789px;background:linear-gradient(90deg,#e6b848 0,#d8aa40 30%,#9a7c38 60%,#5a4c30 85%,#333 100%);clip-path:polygon(0 0,100% 6px,100% calc(100% - 6px),0 100%)"></div>
<div class="a" style="left:1680px;top:110px;width:6px;height:789px;background:linear-gradient(270deg,#e6b848 0,#d8aa40 30%,#9a7c38 60%,#5a4c30 85%,#333 100%);clip-path:polygon(0 6px,100% 0,100% 100%,0 calc(100% - 6px))"></div>

<div class="a" style="left:541px;top:262px;width:1140px;height:485px;background:#000"></div>
<svg class="a" style="left:536px;top:111px" width="110" height="126" viewBox="536 111 110 126"><line x1="588.20" y1="124.10" x2="588.20" y2="115.10" stroke="#b8962e" stroke-width="4.8"/><line x1="594.80" y1="124.68" x2="596.36" y2="115.81" stroke="#5c5c5c" stroke-width="4.8"/><line x1="601.20" y1="126.39" x2="604.27" y2="117.93" stroke="#5c5c5c" stroke-width="4.8"/><line x1="607.20" y1="129.19" x2="611.70" y2="121.40" stroke="#5c5c5c" stroke-width="4.8"/><line x1="612.63" y1="132.99" x2="618.41" y2="126.10" stroke="#5c5c5c" stroke-width="4.8"/><line x1="617.31" y1="137.67" x2="624.20" y2="131.89" stroke="#5c5c5c" stroke-width="4.8"/><line x1="621.11" y1="143.10" x2="628.90" y2="138.60" stroke="#5c5c5c" stroke-width="4.8"/><line x1="623.91" y1="149.10" x2="632.37" y2="146.03" stroke="#5c5c5c" stroke-width="4.8"/><line x1="625.62" y1="155.50" x2="634.49" y2="153.94" stroke="#5c5c5c" stroke-width="4.8"/><line x1="626.20" y1="162.10" x2="635.20" y2="162.10" stroke="#5c5c5c" stroke-width="4.8"/><line x1="625.62" y1="168.70" x2="634.49" y2="170.26" stroke="#5c5c5c" stroke-width="4.8"/><line x1="623.91" y1="175.10" x2="632.37" y2="178.17" stroke="#5c5c5c" stroke-width="4.8"/><line x1="621.11" y1="181.10" x2="628.90" y2="185.60" stroke="#5c5c5c" stroke-width="4.8"/><line x1="617.31" y1="186.53" x2="624.20" y2="192.31" stroke="#5c5c5c" stroke-width="4.8"/><line x1="612.63" y1="191.21" x2="618.41" y2="198.10" stroke="#5c5c5c" stroke-width="4.8"/><line x1="607.20" y1="195.01" x2="611.70" y2="202.80" stroke="#5c5c5c" stroke-width="4.8"/><line x1="601.20" y1="197.81" x2="604.27" y2="206.27" stroke="#5c5c5c" stroke-width="4.8"/><line x1="594.80" y1="199.52" x2="596.36" y2="208.39" stroke="#5c5c5c" stroke-width="4.8"/><line x1="588.20" y1="200.10" x2="588.20" y2="209.10" stroke="#5c5c5c" stroke-width="4.8"/><line x1="581.60" y1="199.52" x2="580.04" y2="208.39" stroke="#5c5c5c" stroke-width="4.8"/><line x1="575.20" y1="197.81" x2="572.13" y2="206.27" stroke="#5c5c5c" stroke-width="4.8"/><line x1="569.20" y1="195.01" x2="564.70" y2="202.80" stroke="#5c5c5c" stroke-width="4.8"/><line x1="563.77" y1="191.21" x2="557.99" y2="198.10" stroke="#5c5c5c" stroke-width="4.8"/><line x1="559.09" y1="186.53" x2="552.20" y2="192.31" stroke="#5c5c5c" stroke-width="4.8"/><line x1="555.29" y1="181.10" x2="547.50" y2="185.60" stroke="#5c5c5c" stroke-width="4.8"/><line x1="552.49" y1="175.10" x2="544.03" y2="178.17" stroke="#5c5c5c" stroke-width="4.8"/><line x1="550.78" y1="168.70" x2="541.91" y2="170.26" stroke="#5c5c5c" stroke-width="4.8"/><line x1="550.20" y1="162.10" x2="541.20" y2="162.10" stroke="#5c5c5c" stroke-width="4.8"/><line x1="550.78" y1="155.50" x2="541.91" y2="153.94" stroke="#5c5c5c" stroke-width="4.8"/><line x1="552.49" y1="149.10" x2="544.03" y2="146.03" stroke="#5c5c5c" stroke-width="4.8"/><line x1="555.29" y1="143.10" x2="547.50" y2="138.60" stroke="#5c5c5c" stroke-width="4.8"/><line x1="559.09" y1="137.67" x2="552.20" y2="131.89" stroke="#5c5c5c" stroke-width="4.8"/><line x1="563.77" y1="132.99" x2="557.99" y2="126.10" stroke="#5c5c5c" stroke-width="4.8"/><line x1="569.20" y1="129.19" x2="564.70" y2="121.40" stroke="#5c5c5c" stroke-width="4.8"/><line x1="575.20" y1="126.39" x2="572.13" y2="117.93" stroke="#5c5c5c" stroke-width="4.8"/><line x1="581.60" y1="124.68" x2="580.04" y2="115.81" stroke="#5c5c5c" stroke-width="4.8"/><polygon points="588.20,126.10 601.20,136.60 593.20,136.60 593.20,143.10 583.20,143.10 583.20,136.60 575.20,136.60" fill="#5c5c5c"/><polygon points="624.20,162.10 613.70,175.10 613.70,167.10 607.20,167.10 607.20,157.10 613.70,157.10 613.70,149.10" fill="#5c5c5c"/><polygon points="588.20,198.10 575.20,187.60 583.20,187.60 583.20,181.10 593.20,181.10 593.20,187.60 601.20,187.60" fill="#5c5c5c"/><polygon points="552.20,162.10 562.70,149.10 562.70,157.10 569.20,157.10 569.20,167.10 562.70,167.10 562.70,175.10" fill="#5c5c5c"/><circle cx="588.2" cy="162.1" r="3.8" fill="#5c5c5c"/><line x1="588.2" y1="162.1" x2="588.20" y2="156.60" stroke="#5c5c5c" stroke-width="1.8"/><line x1="588.2" y1="162.1" x2="592.09" y2="158.21" stroke="#5c5c5c" stroke-width="1.8"/><line x1="588.2" y1="162.1" x2="593.70" y2="162.10" stroke="#5c5c5c" stroke-width="1.8"/><line x1="588.2" y1="162.1" x2="592.09" y2="165.99" stroke="#5c5c5c" stroke-width="1.8"/><line x1="588.2" y1="162.1" x2="588.20" y2="167.60" stroke="#5c5c5c" stroke-width="1.8"/><line x1="588.2" y1="162.1" x2="584.31" y2="165.99" stroke="#5c5c5c" stroke-width="1.8"/><line x1="588.2" y1="162.1" x2="582.70" y2="162.10" stroke="#5c5c5c" stroke-width="1.8"/><line x1="588.2" y1="162.1" x2="584.31" y2="158.21" stroke="#5c5c5c" stroke-width="1.8"/><rect x="541" y="222.7" width="95" height="3" fill="#5a5a5a"/><rect x="586.5" y="216" width="3.5" height="16" fill="#5a5a5a"/></svg>
<svg class="a" style="left:541px;top:262px" width="1140" height="485" viewBox="541 262 1140 485"><defs><filter id="tx" x="0" y="0" width="1" height="1"><feTurbulence type="fractalNoise" baseFrequency="0.35" numOctaves="2" seed="3"/><feColorMatrix type="matrix" values="0 0 0 0 0  0 0 0 0 0  0 0 0 0 0  0 0 0 -1.2 1.1"/><feComposite in2="SourceGraphic" operator="in"/></filter></defs><polygon points="1193,282 1212,288 1246,352 1236,402 1226,455 1214,515 1204,565 1197,612 1193,622" fill="#1a1a1a"/><polygon points="1193,288 1200,289 1204,296 1198,304 1193,306" fill="#8a8a8a"/><polygon points="1225,296 1259,326 1251,338 1214,332 1217,308" fill="#6e6e6e"/><polygon points="1215,345 1243,356 1236,395 1222,420 1210,400 1215,380" fill="#2a2a2a"/><polygon points="1193,458 1221,464 1211,522 1201,580 1193,620" fill="#6a6a6a"/><polygon points="1288,341 1329,343 1318,373 1308,400 1278,394 1285,363" fill="#444"/><polygon points="1290,398 1300,412 1282,434 1270,440 1276,420" fill="#3a3a3a"/><polygon points="1266,452 1271,452 1268,482 1264,482" fill="#505050"/><polygon points="1360,379 1390,394 1385,421 1372,436 1365,443 1364,458 1358,469 1350,458 1349,443 1355,409" fill="#626262"/><polygon points="1365,464 1369,463 1371,476 1367,478" fill="#a0a0a0"/><polygon points="1415,482 1420,484 1422,489 1417,488" fill="#ccc"/><polygon points="1405,390 1416,387 1429,390 1445,374 1438,403 1431,432 1426,469 1423,440 1415,438 1404,414" fill="#7a7a7a"/><polygon points="1251,571 1270,556 1264,598 1251,607 1246,595" fill="#a0a0a0"/><polygon points="1492,358 1500,362 1498,390 1484,408 1482,400 1487,370" fill="#858585"/><polygon points="1512,353 1522,356 1524,368 1516,366" fill="#9a9a9a"/><polygon points="1485,477 1490,481 1481,518 1465,515 1470,488" fill="#999"/><polygon points="1463,533 1490,540 1490,544 1463,539" fill="#bbb"/><polygon points="1545,513 1574,520 1570,539 1546,531" fill="#a0a0a0"/><polygon points="1536,556 1546,556 1547,571 1561,577 1564,552 1568,556 1564,627 1549,643 1521,631 1529,594" fill="#4a4a4a"/><polygon points="1670,654 1679,660 1672,667 1668,664" fill="#ccc"/><polygon points="1498,428 1502,428 1501,440 1497,440" fill="#ccc"/><polygon points="1600,538 1604,540 1603,545 1599,543" fill="#bbb"/><polygon points="1637,588 1641,593 1639,596" fill="#ccc"/><g filter="url(#tx)" opacity="0.55"><polygon points="1193,288 1200,289 1204,296 1198,304 1193,306" fill="#000"/><polygon points="1225,296 1259,326 1251,338 1214,332 1217,308" fill="#000"/><polygon points="1193,458 1221,464 1211,522 1201,580 1193,620" fill="#000"/><polygon points="1288,341 1329,343 1318,373 1308,400 1278,394 1285,363" fill="#000"/><polygon points="1290,398 1300,412 1282,434 1270,440 1276,420" fill="#000"/><polygon points="1266,452 1271,452 1268,482 1264,482" fill="#000"/><polygon points="1360,379 1390,394 1385,421 1372,436 1365,443 1364,458 1358,469 1350,458 1349,443 1355,409" fill="#000"/><polygon points="1366,463 1371,465 1370,478 1366,477" fill="#000"/><polygon points="1405,390 1416,387 1429,390 1445,374 1438,403 1431,432 1426,469 1423,440 1415,438 1404,414" fill="#000"/><polygon points="1251,571 1270,556 1264,598 1251,607 1246,595" fill="#000"/><polygon points="1492,358 1500,362 1498,390 1484,408 1482,400 1487,370" fill="#000"/><polygon points="1512,353 1522,356 1524,368 1516,366" fill="#000"/><polygon points="1485,477 1490,481 1481,518 1465,515 1470,488" fill="#000"/><polygon points="1463,533 1490,540 1490,544 1463,539" fill="#000"/><polygon points="1545,513 1574,520 1570,539 1546,531" fill="#000"/><polygon points="1536,556 1546,556 1547,571 1561,577 1564,552 1568,556 1564,627 1549,643 1521,631 1529,594" fill="#000"/><polygon points="1670,654 1679,660 1672,667 1668,664" fill="#000"/><polygon points="1498,428 1502,428 1501,440 1497,440" fill="#000"/><polygon points="1600,538 1604,540 1603,545 1599,543" fill="#000"/><polygon points="1637,588 1641,593 1639,596" fill="#000"/></g><path d="M1215 345 Q1230 340 1243 352 M1210 400 L1225 418 M1198 338 L1212 336 M1290 398 L1300 412 M1270 440 L1282 434" stroke="#b8b8b8" stroke-width="0.8" fill="none" stroke-dasharray="5 1.5" opacity="0.8"/></svg>

<svg class="a" style="left:1688px;top:90px" width="30" height="350" viewBox="1688 90 30 350"><defs><linearGradient id="pl" x1="0" y1="0" x2="0" y2="1"><stop offset="0" stop-color="#d6ecfb"/><stop offset="1" stop-color="#5aaee8"/></linearGradient></defs><path d="M1695 104 L1708 101 L1713 104 V113 L1700 117 L1695 115Z" fill="url(#pl)" stroke="#8ab8d8" stroke-width="0.8"/><path d="M1700 107 L1708 115" stroke="#1a5a98" stroke-width="2.5" stroke-linecap="round"/><path d="M1700 107 L1708 115" stroke="#6ab4ee" stroke-width="1.2" stroke-linecap="round"/><circle cx="1697" cy="103" r="4.8" fill="#e8f2fa" fill-opacity="0.6" stroke="#6a6a6a" stroke-width="1.1"/><path d="M1689.5 213.5 H1715.5 M1689.5 332.5 H1715.5" stroke="#b0b0b0" stroke-width="1"/><path d="M1689.5 214.5 H1715.5 M1689.5 333.5 H1715.5" stroke="#fff" stroke-width="1"/><path d="M1697 232 L1703 229 L1710 232 L1704 235Z" fill="#b8b8e8" stroke="#30306a" stroke-width="0.9"/><path d="M1697 229.5 L1703 226.5 L1710 229.5 L1704 232.5Z" fill="#c8c8f0" stroke="#30306a" stroke-width="0.9"/><path d="M1697 227 L1703 224 L1710 227 L1704 230Z" fill="#d8d8f8" stroke="#30306a" stroke-width="0.9"/><path d="M1697 352 L1703 348 L1710 351 L1704 355Z" fill="#c8c8f0" stroke="#30306a" stroke-width="0.9"/><path d="M1697 349 L1703 345 L1710 348 L1704 352Z" fill="#fff" stroke="#30306a" stroke-width="0.9"/><circle cx="1703.5" cy="348.5" r="1.5" fill="#e02020"/></svg>
<div class="a nw" style="left:1708px;top:124px;font-size:11px;line-height:11px;transform-origin:0 0;transform:rotate(90deg)">Product Library</div>
<div class="a nw" style="left:1708px;top:242px;font-size:11px;line-height:11px;transform-origin:0 0;transform:rotate(90deg)">Layer Manager</div>
<div class="a nw" style="left:1708px;top:361px;font-size:11px;line-height:11px;transform-origin:0 0;transform:rotate(90deg)">Mask Manager</div>
<div class="a" style="left:1239px;top:903px;width:1px;height:20px;background:#a0a0a0"></div><div class="a" style="left:1240px;top:903px;width:1px;height:20px;background:#fff"></div>
<div class="a" style="left:1361px;top:903px;width:1px;height:20px;background:#a0a0a0"></div><div class="a" style="left:1362px;top:903px;width:1px;height:20px;background:#fff"></div>
<div class="a" style="left:1563px;top:903px;width:1px;height:20px;background:#a0a0a0"></div><div class="a" style="left:1564px;top:903px;width:1px;height:20px;background:#fff"></div>
<div class="a nw tree" style="left:1267px;top:904px">X</div>
<div class="a nw tree" style="left:1290px;top:904px">-- Y</div>
<div class="a nw tree" style="left:1325px;top:904px">--</div>
<div class="a nw tree" style="left:1414px;top:904px">Lat</div>
<div class="a nw tree" style="left:1451px;top:904px">-- Lon</div>
<div class="a nw tree" style="left:1503px;top:904px">--</div>
<div class="a nw tree" style="left:1600px;top:904px">Zoom -- Level --</div>

<!--STATUS-->
<div class="a" style="left:530px;top:247px;width:663px;height:433px;border-radius:7px 7px 6px 6px;border:1px solid #b4b8ac;background:linear-gradient(90deg,#c9dca6 0,#9fb27f 1.2%,#4a5142 4%,#2e322b 20%,#3a3e36 60%,#44493f 95%,#3a3e36 100%);box-shadow:0 0 0 1px rgba(255,255,255,0.25) inset"></div>
<div class="a" style="left:1187px;top:275px;width:5px;height:400px;background:linear-gradient(180deg,#3a3e36 0,#8a9a78 10%,#c0d0a0 14%,#4a5040 22%,#2e322b 40%,#6a7858 60%,#2e322b 75%,#3a3e36 100%)"></div>
<div class="a" style="left:531px;top:248px;width:661px;height:27px;border-radius:6px 6px 0 0;background:linear-gradient(180deg,rgba(255,255,255,0.12),rgba(0,0,0,0) 60%)"></div>
<div class="a" style="left:531px;top:674px;width:661px;height:5px;border-radius:0 0 6px 6px;background:linear-gradient(90deg,#b8cc94 0,#1e201c 8%,#202220 90%,#3a3e36 100%)"></div>
<svg class="a" style="left:538px;top:252px" width="16" height="17" viewBox="0 0 16 17"><defs><linearGradient id="sia" x1="0" y1="1" x2="1" y2="0"><stop offset="0" stop-color="#f0e8d8"/><stop offset="0.25" stop-color="#3aa8b8"/><stop offset="0.5" stop-color="#0a5a6a"/><stop offset="1" stop-color="#102030"/></linearGradient></defs><rect x="0" y="0.5" width="6" height="16" fill="#6e6e6e"/><text transform="translate(5.3 16.3) rotate(-90)" font-size="6.2" font-weight="bold" fill="#fff" font-family="Liberation Sans" textLength="15.5" lengthAdjust="spacingAndGlyphs">SNAP</text><rect x="6.5" y="0.5" width="9" height="16" fill="url(#sia)"/><path d="M6.5 0.5 H15.5 V2 L6.5 7Z" fill="#000030"/><path d="M6.5 7 L15.5 2 V8 L6.5 12Z" fill="#60607e"/><path d="M6.5 12 L15.5 8 V10.5 L6.5 15Z" fill="#080808"/></svg>
<div class="a nw" style="left:559px;top:253px;font-size:12px;line-height:16px;color:#000;text-shadow:0 0 6px #fff,0 0 10px #fff">SNAP</div>
<div class="a" style="left:1140px;top:247px;width:47px;height:19px;border:1px solid #9aa292;border-top:none;border-radius:0 0 5px 5px;background:linear-gradient(180deg,#5e6556,#474c42);box-shadow:inset 0 0 0 1px #2a2d28"></div>
<svg class="a" style="left:1157px;top:250px" width="16" height="12" viewBox="0 0 16 12"><path d="M4 2.5 L12 9.5 M12 2.5 L4 9.5" stroke="#3a3f5a" stroke-width="3.8"/><path d="M4 2.5 L12 9.5 M12 2.5 L4 9.5" stroke="#fff" stroke-width="2.2"/></svg>
<div class="a" style="left:536px;top:275px;width:652px;height:400px;border:1px solid #30342c;background:#f0f0f0"></div>
<div class="a" style="left:547px;top:312px;width:60px;height:342px;background:#f6f6f6"></div>
<div class="a" style="left:1110px;top:313px;width:58px;height:21px;border:1px solid #3c7fb1;border-radius:3px;background:linear-gradient(180deg,#eaf6fd 0,#d9f0fc 50%,#bee6fd 51%,#a7d9f5 100%)"></div>
<div class="a nw tree" style="left:1130px;top:314px;line-height:18px">et...</div>
<div class="a" style="left:1100px;top:614px;width:75px;height:21px;border:1px solid #3c7fb1;border-radius:3px;background:linear-gradient(180deg,#eaf6fd 0,#d9f0fc 50%,#bee6fd 51%,#a7d9f5 100%)"></div>
<div class="a nw tree" style="left:1132px;top:615px;line-height:18px">duct</div>
<div class="a" style="left:1100px;top:641px;width:75px;height:21px;border:1px solid #707070;border-radius:3px;background:linear-gradient(180deg,#f2f2f2 0,#ebebeb 50%,#dddddd 51%,#cfcfcf 100%)"></div>
<div class="a nw tree" style="left:1130px;top:642px;line-height:18px">l</div>
<svg class="a" style="left:560px;top:315px" width="40" height="330" viewBox="560 315 40 330"><circle cx="583" cy="333" r="8" fill="#dde4ec" stroke="#8a98a8" stroke-width="1.2"/><path d="M583 327 V333 H587" stroke="#555" stroke-width="1.2" fill="none"/><path d="M575 345 L590 340 L596 350 L580 355Z" fill="#4b88c8" stroke="#555" stroke-width="0.8"/><path d="M578 343 L590 339 L594 347 L581 351Z" fill="#9ed0a0"/><rect x="575" y="402" width="22" height="20" fill="#2a64c0" stroke="#444" stroke-width="1"/><rect x="576" y="403" width="20" height="10" fill="#4a8ae0"/><path d="M576 466 L590 463 V493 L576 495Z" fill="#f0d890" stroke="#b89a48" stroke-width="1"/><path d="M584 468 H598 V493 H584Z" fill="#e8e8e8" stroke="#999" stroke-width="0.6"/><rect x="574" y="545" width="7" height="15" fill="#d8d8d8" stroke="#888" stroke-width="0.8"/><path d="M580 539 L598 535 V558 L580 560Z" fill="#1a3ab0" stroke="#333" stroke-width="1"/><circle cx="586" cy="620" r="13" fill="#2a8a3a"/><path d="M578 610 Q586 605 596 612 L592 622 Q584 616 578 624Z" fill="#3a7ad8"/><rect x="586" y="618" width="12" height="14" fill="#1a3ab0" stroke="#333" stroke-width="0.8"/></svg>
<div class="a nw tree" style="left:553px;top:356px;line-height:16px">Недавн</div>
<div class="a nw tree" style="left:555px;top:426px;line-height:16px">Рабочи</div>
<div class="a nw tree" style="left:553px;top:496px;line-height:16px">Мои док</div>
<div class="a nw tree" style="left:560px;top:566px;line-height:16px">Компь</div>
<div class="a nw tree" style="left:578px;top:636px;line-height:16px">Сет</div>

<div class="a" style="left:578px;top:276px;width:15px;height:398px;background:linear-gradient(90deg,rgba(0,0,0,0),rgba(0,0,0,0.22))"></div>
<div class="a" style="left:1130px;top:276px;width:16px;height:398px;background:linear-gradient(90deg,rgba(0,0,0,0.35),rgba(0,0,0,0))"></div>
<div class="a" style="left:593px;top:225px;width:538px;height:478px;border-radius:7px 7px 6px 6px;border:1px solid #c4c8bc;background:linear-gradient(90deg,#7d8a6a 0,#c8daa6 1.2%,#8c9878 3%,#8e987c 50%,#8a9480 97%,#bfd2a0 99%,#7a8670 100%)"></div>
<div class="a" style="left:594px;top:253px;width:5px;height:444px;background:linear-gradient(180deg,#9aa88a 0,#c8dca8 8%,#8a9a70 15%,#b8d090 25%,#6a7a58 35%,#c0d898 45%,#90a078 55%,#c8e0a0 65%,#7a8a60 75%,#b8d090 85%,#a0b080 92%,#c8d8a8 100%)"></div>
<div class="a" style="left:1125px;top:253px;width:5px;height:444px;background:linear-gradient(180deg,#8a9482 0,#a8b498 10%,#8c9a7c 25%,#b8cc98 40%,#7a8868 50%,#c0d8a0 60%,#5a6a48 75%,#b0c890 85%,#c8dca0 100%)"></div>
<div class="a" style="left:594px;top:226px;width:536px;height:28px;border-radius:6px 6px 0 0;background:linear-gradient(90deg,#a3ad95 0,#a0aa90 12%,#6c7a56 24%,#45532f 38%,#4a5636 52%,#6f7a60 66%,#a8b29c 78%,#b4bca8 86%,#98a08e 100%)"></div>
<div class="a" style="left:596px;top:227px;width:190px;height:26px;background:radial-gradient(ellipse 50% 50% at 50% 50%,rgba(200,208,188,0.85) 0,rgba(180,190,165,0.5) 50%,rgba(160,170,140,0) 100%)"></div>
<div class="a" style="left:594px;top:226px;width:536px;height:1px;border-radius:6px 6px 0 0;background:rgba(255,255,255,0.5)"></div>
<svg class="a" style="left:600px;top:230px" width="16" height="17" viewBox="0 0 16 17"><defs><linearGradient id="sib" x1="0" y1="1" x2="1" y2="0"><stop offset="0" stop-color="#f0e8d8"/><stop offset="0.25" stop-color="#3aa8b8"/><stop offset="0.5" stop-color="#0a5a6a"/><stop offset="1" stop-color="#102030"/></linearGradient></defs><rect x="0" y="0.5" width="6" height="16" fill="#6e6e6e"/><text transform="translate(5.3 16.3) rotate(-90)" font-size="6.2" font-weight="bold" fill="#fff" font-family="Liberation Sans" textLength="15.5" lengthAdjust="spacingAndGlyphs">SNAP</text><rect x="6.5" y="0.5" width="9" height="16" fill="url(#sib)"/><path d="M6.5 0.5 H15.5 V2 L6.5 7Z" fill="#000030"/><path d="M6.5 7 L15.5 2 V8 L6.5 12Z" fill="#60607e"/><path d="M6.5 12 L15.5 8 V10.5 L6.5 15Z" fill="#080808"/></svg>
<div class="a nw" style="left:621px;top:231px;font-size:11.8px;line-height:16px;color:#000;text-shadow:0 0 7px rgba(225,232,212,0.9)">Specify Product Subset</div>
<div class="a" style="left:1077px;top:225px;width:48px;height:20px;border:1px solid #5a2418;border-top:none;border-radius:0 0 5px 5px;background:linear-gradient(180deg,#e8a898 0,#d88a74 35%,#c23a1e 55%,#b8381e 80%,#d0705a 100%);box-shadow:inset 0 0 0 1px rgba(255,220,210,0.55)"></div>
<svg class="a" style="left:1093px;top:227px" width="17" height="13" viewBox="0 0 17 13"><path d="M4 2.5 L13 10 M13 2.5 L4 10" stroke="#3a3f5a" stroke-width="4"/><path d="M4 2.5 L13 10 M13 2.5 L4 10" stroke="#fff" stroke-width="2.3"/></svg>
<div class="a" style="left:594px;top:696px;width:536px;height:6px;border-radius:0 0 6px 6px;background:linear-gradient(90deg,#c0d49c 0,#2a2e26 6%,#1e221c 50%,#3a4034 95%,#a8b890 100%)"></div>
<div class="a" style="left:599px;top:253px;width:526px;height:444px;border:1px solid #353a30;background:#f0f0f0"></div>
<div class="a" style="left:605px;top:281px;width:511px;height:358px;border:1px solid #898c95;background:linear-gradient(180deg,#fcfcfc 0,#f0f0f0 6px)"></div>
<div class="a" style="left:687px;top:263px;width:71px;height:19px;border:1px solid #898c95;border-bottom:none;background:linear-gradient(180deg,#f2f2f2 0,#ebebeb 50%,#dddddd 51%,#cfcfcf 100%)"></div>
<div class="a" style="left:758px;top:263px;width:91px;height:19px;border:1px solid #898c95;border-bottom:none;background:linear-gradient(180deg,#f2f2f2 0,#ebebeb 50%,#dddddd 51%,#cfcfcf 100%)"></div>
<div class="a" style="left:606px;top:261px;width:82px;height:22px;border:1px solid #898c95;border-bottom:none;background:#fff"></div>
<div class="a nw tree" style="left:612px;top:262px">Spatial Subset</div>
<div class="a nw tree" style="left:692px;top:265px">Band Subset</div>
<div class="a nw tree" style="left:763px;top:265px">Metadata Subset</div>
<div class="a" style="left:615px;top:292px;width:180px;height:337px;border:1px solid #a8a8a8;background:#f0f0f0"></div>
<div class="a" style="left:616px;top:293px;width:161px;height:336px;border:1px solid #6a9ad8;border-right:2px solid #6a9ad8;background:#f0f0f0"></div>
<svg class="a" style="left:779px;top:296px" width="14" height="330" viewBox="779 296 14 330"><path d="M783 305 L786.5 301 L790 305Z" fill="#444"/><path d="M783 619 L786.5 623 L790 619Z" fill="#444"/></svg>
<svg class="a" style="left:617px;top:294px" width="159" height="68" viewBox="0 0 159 68"><rect x="0" y="0" width="159" height="67" fill="#fff"/><path d="M-30.0 67 Q-16.0 40 -8.0 0 L-3.0 0 Q-11.0 40 -24.0 67Z" fill="#ebebeb"/><path d="M-18.5 67 Q-4.5 40 3.5 0 L8.5 0 Q0.5 40 -12.5 67Z" fill="#ebebeb"/><path d="M-7.0 67 Q7.0 40 15.0 0 L20.0 0 Q12.0 40 -1.0 67Z" fill="#ebebeb"/><path d="M4.5 67 Q18.5 40 26.5 0 L31.5 0 Q23.5 40 10.5 67Z" fill="#ebebeb"/><path d="M16.0 67 Q30.0 40 38.0 0 L43.0 0 Q35.0 40 22.0 67Z" fill="#ebebeb"/><path d="M27.5 67 Q41.5 40 49.5 0 L54.5 0 Q46.5 40 33.5 67Z" fill="#ebebeb"/><path d="M39.0 67 Q53.0 40 61.0 0 L66.0 0 Q58.0 40 45.0 67Z" fill="#ebebeb"/><path d="M50.5 67 Q64.5 40 72.5 0 L77.5 0 Q69.5 40 56.5 67Z" fill="#ebebeb"/><path d="M62.0 67 Q76.0 40 84.0 0 L89.0 0 Q81.0 40 68.0 67Z" fill="#ebebeb"/><path d="M73.5 67 Q87.5 40 95.5 0 L100.5 0 Q92.5 40 79.5 67Z" fill="#ebebeb"/><path d="M85.0 67 Q99.0 40 107.0 0 L112.0 0 Q104.0 40 91.0 67Z" fill="#ebebeb"/><path d="M96.5 67 Q110.5 40 118.5 0 L123.5 0 Q115.5 40 102.5 67Z" fill="#ebebeb"/><path d="M108.0 67 Q122.0 40 130.0 0 L135.0 0 Q127.0 40 114.0 67Z" fill="#ebebeb"/><path d="M119.5 67 Q133.5 40 141.5 0 L146.5 0 Q138.5 40 125.5 67Z" fill="#ebebeb"/><path d="M131.0 67 Q145.0 40 153.0 0 L158.0 0 Q150.0 40 137.0 67Z" fill="#ebebeb"/><path d="M142.5 67 Q156.5 40 164.5 0 L169.5 0 Q161.5 40 148.5 67Z" fill="#ebebeb"/><path d="M6 0 H17 L16 3 L12 4 L7 3Z" fill="#000"/><path d="M18 0 H28 L27 4 L23 6 L19 4Z" fill="#000"/><path d="M27 1 H36 L35 6 L33 11 L31 17 L28 15 L27 8Z" fill="#000"/><path d="M37 1 L46 2 L45 7 L42 11 L40 15 L38 12 L38 6Z" fill="#000"/><path d="M48 2 L52 4 L50 8 L47 6Z" fill="#000"/><path d="M55 0 H63 L62 3 L56 3Z" fill="#000"/><path d="M35 20 L39 20 L40 23 L36 24Z" fill="#000"/><path d="M45 25 L49 25 L50 33 L49 42 L46 42 L44 33Z" fill="#000"/><path d="M56 32 L59 33 L59 42 L56 50 L53 54 L51 52 L53 43Z" fill="#000"/><path d="M72 15 L75 14 L75 20 L73 25 L71 24Z" fill="#000"/><path d="M79 11 L85 9 L86 17 L84 25 L81 29 L79 27 L80 18Z" fill="#000"/><path d="M81 0 H157 V5 L150 6 L141 6 L140 14 L136 14 L131 24 L128 22 L125 28 L122 27 L121 20 L118 26 L112 28 L111 18 L107 24 L104 28 L102 18 L99 12 L96 10 L92 8 L88 7 L84 6 L82 4Z" fill="#000"/><path d="M90 8 L96 9 L94 20 L92 32 L89 44 L87 51 L85 49 L86 38 L88 24Z" fill="#000"/><path d="M98 40 L102 41 L102 46 L99 47Z" fill="#000"/><path d="M128 28 L133 29 L133 36 L129 37Z" fill="#000"/><path d="M131 40 L132 40 L132 46 L131 46Z" fill="#000"/><path d="M138 34 L144 34 L144 38 L143 44 L142 52 L138 51 L137 44Z" fill="#000"/><path d="M12 64 H51 L50 66 H14Z" fill="#000"/><path d="M67 63.5 H155 L154 66 H69Z" fill="#000"/><rect x="95" y="2" width="2" height="1.5" fill="#fff"/><rect x="104" y="3" width="2" height="1.5" fill="#fff"/><rect x="118" y="2" width="2" height="1.5" fill="#fff"/><rect x="127" y="4" width="2" height="1.5" fill="#fff"/><rect x="146" y="2" width="2" height="1.5" fill="#fff"/><rect x="110" y="6" width="2" height="1.5" fill="#fff"/><rect x="133" y="3" width="2" height="1.5" fill="#fff"/><rect x="0" y="67" width="159" height="1" fill="#fff"/></svg>
<div class="a" style="left:806px;top:339px;width:299px;height:96px;border:1px solid #898c95;background:linear-gradient(180deg,#fcfcfc 0,#f0f0f0 5px)"></div>
<div class="a" style="left:808px;top:321px;width:93px;height:19px;border:1px solid #898c95;border-bottom:none;background:linear-gradient(180deg,#f2f2f2 0,#ebebeb 50%,#dddddd 51%,#cfcfcf 100%)"></div>
<div class="a" style="left:901px;top:319px;width:92px;height:22px;border:1px solid #898c95;border-bottom:none;background:#fff"></div>
<div class="a nw tree" style="left:813px;top:322px">Pixel Coordinates</div>
<div class="a nw tree" style="left:906px;top:320px">Geo Coordinates</div>
<div class="a nw tree" style="left:810px;top:348px">North latitude bound:</div>
<div class="a" style="left:970px;top:347px;width:133px;height:20px;border:1px solid #abadb3;border-top-color:#abadb3;background:#fff"></div>
<div class="a nw tree" style="left:970px;top:348px;width:115px;text-align:right">83.632</div>
<svg class="a" style="left:1086px;top:348px" width="16" height="18" viewBox="0 0 16 18"><rect x="0.5" y="0.5" width="15" height="8.5" fill="#f4f4f4" stroke="#c8c8c8"/><rect x="0.5" y="9.5" width="15" height="8.0" fill="#f4f4f4" stroke="#c8c8c8"/><path d="M5 6.0 L8 3.0 L11 6.0Z M5 11.0 L8 14.0 L11 11.0Z" fill="#4a5a9a"/></svg>
<div class="a nw tree" style="left:810px;top:369px">West longitude bound:</div>
<div class="a" style="left:970px;top:368px;width:133px;height:20px;border:1px solid #abadb3;border-top-color:#abadb3;background:#fff"></div>
<div class="a nw tree" style="left:970px;top:369px;width:115px;text-align:right">-179.813</div>
<svg class="a" style="left:1086px;top:369px" width="16" height="18" viewBox="0 0 16 18"><rect x="0.5" y="0.5" width="15" height="8.5" fill="#f4f4f4" stroke="#c8c8c8"/><rect x="0.5" y="9.5" width="15" height="8.0" fill="#f4f4f4" stroke="#c8c8c8"/><path d="M5 6.0 L8 3.0 L11 6.0Z M5 11.0 L8 14.0 L11 11.0Z" fill="#4a5a9a"/></svg>
<div class="a nw tree" style="left:810px;top:393px">South latitude bound:</div>
<div class="a" style="left:970px;top:392px;width:133px;height:20px;border:1px solid #abadb3;border-top-color:#abadb3;background:#fff"></div>
<div class="a nw tree" style="left:970px;top:393px;width:115px;text-align:right">-83.632</div>
<svg class="a" style="left:1086px;top:393px" width="16" height="18" viewBox="0 0 16 18"><rect x="0.5" y="0.5" width="15" height="8.5" fill="#f4f4f4" stroke="#c8c8c8"/><rect x="0.5" y="9.5" width="15" height="8.0" fill="#f4f4f4" stroke="#c8c8c8"/><path d="M5 6.0 L8 3.0 L11 6.0Z M5 11.0 L8 14.0 L11 11.0Z" fill="#4a5a9a"/></svg>
<div class="a nw tree" style="left:810px;top:414px">East longitude bound:</div>
<div class="a" style="left:970px;top:413px;width:133px;height:20px;border:1px solid #abadb3;border-top-color:#abadb3;background:#fff"></div>
<div class="a nw tree" style="left:970px;top:414px;width:115px;text-align:right">179.813</div>
<svg class="a" style="left:1086px;top:414px" width="16" height="18" viewBox="0 0 16 18"><rect x="0.5" y="0.5" width="15" height="8.5" fill="#f4f4f4" stroke="#c8c8c8"/><rect x="0.5" y="9.5" width="15" height="8.0" fill="#f4f4f4" stroke="#c8c8c8"/><path d="M5 6.0 L8 3.0 L11 6.0Z M5 11.0 L8 14.0 L11 11.0Z" fill="#4a5a9a"/></svg>
<div class="a nw tree" style="left:805px;top:444px">Scene step X:</div>
<div class="a" style="left:966px;top:443px;width:141px;height:20px;border:1px solid #abadb3;border-top-color:#abadb3;background:#fff"></div>
<div class="a nw tree" style="left:966px;top:444px;width:123px;text-align:right">1</div>
<svg class="a" style="left:1090px;top:444px" width="16" height="18" viewBox="0 0 16 18"><rect x="0.5" y="0.5" width="15" height="8.5" fill="#f4f4f4" stroke="#c8c8c8"/><rect x="0.5" y="9.5" width="15" height="8.0" fill="#f4f4f4" stroke="#c8c8c8"/><path d="M5 6.0 L8 3.0 L11 6.0Z M5 11.0 L8 14.0 L11 11.0Z" fill="#4a5a9a"/></svg>
<div class="a nw tree" style="left:805px;top:465px">Scene step Y:</div>
<div class="a" style="left:966px;top:464px;width:141px;height:20px;border:1px solid #abadb3;border-top-color:#abadb3;background:#fff"></div>
<div class="a nw tree" style="left:966px;top:465px;width:123px;text-align:right">1</div>
<svg class="a" style="left:1090px;top:465px" width="16" height="18" viewBox="0 0 16 18"><rect x="0.5" y="0.5" width="15" height="8.5" fill="#f4f4f4" stroke="#c8c8c8"/><rect x="0.5" y="9.5" width="15" height="8.0" fill="#f4f4f4" stroke="#c8c8c8"/><path d="M5 6.0 L8 3.0 L11 6.0Z M5 11.0 L8 14.0 L11 11.0Z" fill="#4a5a9a"/></svg>
<div class="a nw tree" style="left:805px;top:486px">Subset scene width:</div>
<div class="a nw tree" style="left:1006px;top:486px;width:101px;text-align:right">964.0</div>
<div class="a nw tree" style="left:805px;top:501px">Subset scene height:</div>
<div class="a nw tree" style="left:1006px;top:501px;width:101px;text-align:right">406.0</div>
<div class="a nw tree" style="left:805px;top:519px">Source scene width:</div>
<div class="a nw tree" style="left:1006px;top:519px;width:101px;text-align:right">964</div>
<div class="a nw tree" style="left:805px;top:534px">Source scene height:</div>
<div class="a nw tree" style="left:1006px;top:534px;width:101px;text-align:right">406</div>
<div class="a" style="left:807px;top:570px;width:151px;height:21px;border:1px solid #3c7fb1;border-radius:3px;background:linear-gradient(180deg,#eaf6fd 0,#d9f0fc 50%,#bee6fd 51%,#a7d9f5 100%)"></div>
<div class="a" style="left:809px;top:572px;width:147px;height:17px;border:1px dotted #000"></div>
<div class="a nw tree" style="left:807px;top:571px;width:151px;text-align:center">Use Preview</div>
<div class="a" style="left:970px;top:562px;width:13px;height:13px;border:1px solid #8e8f8f;background:linear-gradient(135deg,#dcdcdc,#fafafa)"></div>
<div class="a" style="left:973px;top:565px;width:7px;height:7px;background:linear-gradient(135deg,#cbcbcb,#f6f6f6)"></div>
<div class="a nw tree" style="left:986px;top:559px">Fix full width</div>
<div class="a" style="left:970px;top:586px;width:13px;height:13px;border:1px solid #8e8f8f;background:linear-gradient(135deg,#dcdcdc,#fafafa)"></div>
<div class="a" style="left:973px;top:589px;width:7px;height:7px;background:linear-gradient(135deg,#cbcbcb,#f6f6f6)"></div>
<div class="a nw tree" style="left:986px;top:583px">Fix full height</div>
<div class="a nw tree" style="left:900px;top:642px;width:217px;text-align:right">Estimated, raw storage size: 0.4M</div>
<div class="a" style="left:946px;top:668px;width:45px;height:21px;border:1px solid #707070;border-radius:3px;background:linear-gradient(180deg,#f2f2f2 0,#ebebeb 50%,#dddddd 51%,#cfcfcf 100%)"></div>
<div class="a nw tree" style="left:946px;top:669px;width:45px;text-align:center">OK</div>
<div class="a" style="left:997px;top:668px;width:63px;height:21px;border:1px solid #707070;border-radius:3px;background:linear-gradient(180deg,#f2f2f2 0,#ebebeb 50%,#dddddd 51%,#cfcfcf 100%)"></div>
<div class="a nw tree" style="left:997px;top:669px;width:63px;text-align:center">Cancel</div>
<div class="a" style="left:1066px;top:668px;width:51px;height:21px;border:1px solid #707070;border-radius:3px;background:linear-gradient(180deg,#f2f2f2 0,#ebebeb 50%,#dddddd 51%,#cfcfcf 100%)"></div>
<div class="a nw tree" style="left:1066px;top:669px;width:51px;text-align:center">Help</div>

</body></html>
